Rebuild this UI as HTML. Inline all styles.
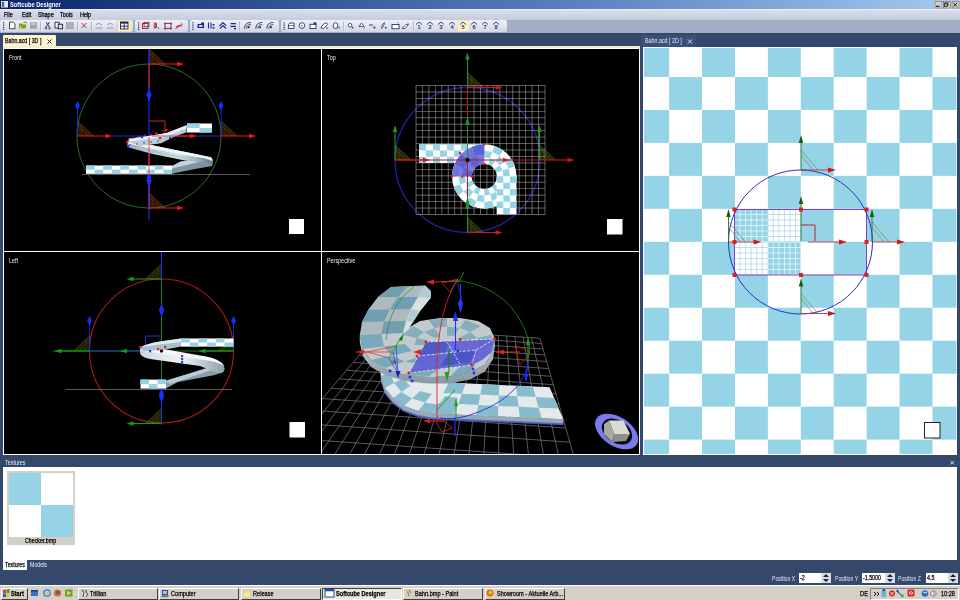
<!DOCTYPE html>
<html><head><meta charset="utf-8">
<style>
*{margin:0;padding:0;box-sizing:border-box}
html,body{width:960px;height:600px;overflow:hidden;background:#34486c;font-family:"Liberation Sans",sans-serif}
.a{position:absolute}
.t{position:absolute;white-space:nowrap;line-height:1;transform-origin:0 0}
svg{position:absolute;left:0;top:0}
</style></head><body>

<div class="a" style="left:0;top:33px;width:960px;height:567px;background:#34486c"></div>
<div class="a" style="left:0;top:0;width:960px;height:9px;background:linear-gradient(90deg,#0a246a 0%,#28488a 22%,#5a80c0 60%,#a6caf0 100%)"></div>
<div class="t" style="left:10px;top:0.8px;font-size:7.2px;color:#fff;font-weight:bold;transform:scaleX(0.8);">Softcube Designer</div>
<div class="a" style="left:0;top:9px;width:960px;height:11px;background:linear-gradient(#dadee9,#c6ccdd);border-top:1px solid #eceef5"></div>
<div class="t" style="left:4px;top:11.6px;font-size:6.6px;color:#000;font-weight:normal;transform:scaleX(0.82);-webkit-text-stroke:0.25px #000;">File</div>
<div class="t" style="left:22px;top:11.6px;font-size:6.6px;color:#000;font-weight:normal;transform:scaleX(0.82);-webkit-text-stroke:0.25px #000;">Edit</div>
<div class="t" style="left:38px;top:11.6px;font-size:6.6px;color:#000;font-weight:normal;transform:scaleX(0.82);-webkit-text-stroke:0.25px #000;">Shape</div>
<div class="t" style="left:60px;top:11.6px;font-size:6.6px;color:#000;font-weight:normal;transform:scaleX(0.82);-webkit-text-stroke:0.25px #000;">Tools</div>
<div class="t" style="left:80px;top:11.6px;font-size:6.6px;color:#000;font-weight:normal;transform:scaleX(0.82);-webkit-text-stroke:0.25px #000;">Help</div>
<div class="a" style="left:0;top:20px;width:960px;height:13px;background:#a2adc6"></div>
<div class="a" style="left:0px;top:20px;width:133px;height:12px;background:linear-gradient(#eef1f7,#d0d6e5);border-radius:2px"></div>
<div class="a" style="left:135px;top:20px;width:53px;height:12px;background:linear-gradient(#eef1f7,#d0d6e5);border-radius:2px"></div>
<div class="a" style="left:190px;top:20px;width:89px;height:12px;background:linear-gradient(#eef1f7,#d0d6e5);border-radius:2px"></div>
<div class="a" style="left:281px;top:20px;width:226px;height:12px;background:linear-gradient(#eef1f7,#d0d6e5);border-radius:2px"></div>
<svg width="960" height="600" viewBox="0 0 960 600" ><rect x="3" y="22.2" width="1.2" height="1.2" fill="#2a3050"/><rect x="3" y="24.4" width="1.2" height="1.2" fill="#2a3050"/><rect x="3" y="26.6" width="1.2" height="1.2" fill="#2a3050"/><rect x="3" y="28.8" width="1.2" height="1.2" fill="#2a3050"/><path d="M9.5 22 L13.2 22 L15 23.8 L15 28.7 L9.5 28.7 Z" fill="#fff" stroke="#222" stroke-width="0.8"/><path d="M19 23.5 L22 23.5 L23 24.5 L26.5 24.5 L25.5 28.6 L19 28.6 Z" fill="#8a9418"/><path d="M20 25.5 L22 27 L20 28.5 Z" fill="#e8e060"/><path d="M23.5 22.5 Q25.5 21.5 27 23" fill="none" stroke="#333" stroke-width="0.7"/><rect x="30" y="22" width="7" height="6.8" fill="#a4a4a8"/><rect x="31.2" y="22.5" width="4.6" height="2.6" fill="#c8c8cc"/><rect x="40.3" y="21.5" width="0.8" height="9" fill="#9aa4bc"/><rect x="41.099999999999994" y="21.5" width="0.6" height="9" fill="#fff" opacity="0.7"/><path d="M46 22 L49.5 27 M49.5 22 L46 27" stroke="#1a2050" stroke-width="0.9"/><circle cx="46" cy="28.2" r="0.9" fill="none" stroke="#1a2050" stroke-width="0.7"/><circle cx="49.5" cy="28.2" r="0.9" fill="none" stroke="#1a2050" stroke-width="0.7"/><rect x="55" y="22.2" width="4.2" height="5.8" fill="#fff" stroke="#111" stroke-width="0.8"/><rect x="58.2" y="24.2" width="4.4" height="4.6" fill="#dde" stroke="#111" stroke-width="0.8"/><rect x="66.5" y="22.5" width="7" height="6.3" fill="#b0b0b4" stroke="#98989c" stroke-width="0.6"/><rect x="77.2" y="21.5" width="0.8" height="9" fill="#9aa4bc"/><rect x="78.0" y="21.5" width="0.6" height="9" fill="#fff" opacity="0.7"/><path d="M81.5 23 L86.5 28 M86.5 23 L81.5 28" stroke="#c02848" stroke-width="1"/><rect x="91.2" y="21.5" width="0.8" height="9" fill="#9aa4bc"/><rect x="92.0" y="21.5" width="0.6" height="9" fill="#fff" opacity="0.7"/><path d="M95.5 28 L102 28 M96 24.5 Q99 22 102 25" fill="none" stroke="#909098" stroke-width="0.9"/><path d="M107 28 L113.5 28 M107 25 Q110 22 113 24.5" fill="none" stroke="#909098" stroke-width="0.9"/><rect x="116.8" y="21.5" width="0.8" height="9" fill="#9aa4bc"/><rect x="117.6" y="21.5" width="0.6" height="9" fill="#fff" opacity="0.7"/><rect x="118" y="20.5" width="13" height="11" fill="#fdf3c8" stroke="#f0d890" stroke-width="0.6"/><rect x="120.5" y="22" width="7.5" height="7" fill="#fff" stroke="#1a2060" stroke-width="0.9"/><rect x="120.5" y="22" width="7.5" height="1.6" fill="#1a2060"/><path d="M124.25 23.5 L124.25 29 M120.5 26.2 L128 26.2" stroke="#1a2060" stroke-width="0.9"/><rect x="138" y="22.2" width="1.2" height="1.2" fill="#2a3050"/><rect x="138" y="24.4" width="1.2" height="1.2" fill="#2a3050"/><rect x="138" y="26.6" width="1.2" height="1.2" fill="#2a3050"/><rect x="138" y="28.8" width="1.2" height="1.2" fill="#2a3050"/><rect x="142.5" y="23.5" width="5.5" height="5" fill="none" stroke="#d81830" stroke-width="1"/><rect x="144" y="22.3" width="5" height="4.5" fill="none" stroke="#303050" stroke-width="0.7"/><path d="M155 22.5 Q153 26 155 28.5 Q157 26 155 22.5" fill="none" stroke="#d81830" stroke-width="1"/><path d="M156.5 23 L156.5 28" stroke="#303050" stroke-width="0.7"/><circle cx="158.5" cy="28" r="0.6" fill="#222"/><rect x="165" y="23.5" width="6" height="5" fill="none" stroke="#303050" stroke-width="0.8"/><rect x="164.1" y="22.6" width="1.8" height="1.8" fill="#d81830"/><rect x="170.1" y="22.6" width="1.8" height="1.8" fill="#d81830"/><rect x="164.1" y="27.6" width="1.8" height="1.8" fill="#d81830"/><rect x="170.1" y="27.6" width="1.8" height="1.8" fill="#d81830"/><path d="M175.5 28.5 L182 24.5 M176 27 Q179 24 182 26" fill="none" stroke="#d81830" stroke-width="1"/><path d="M181 22.5 L182.5 24.5" stroke="#333" stroke-width="0.6"/><rect x="192.3" y="22.2" width="1.2" height="1.2" fill="#2a3050"/><rect x="192.3" y="24.4" width="1.2" height="1.2" fill="#2a3050"/><rect x="192.3" y="26.6" width="1.2" height="1.2" fill="#2a3050"/><rect x="192.3" y="28.8" width="1.2" height="1.2" fill="#2a3050"/><path d="M197.5 24 L201 24 L201 22.5 L204 22.5 L204 28 L197.5 28 Z" fill="#202890"/><rect x="199" y="25" width="3.5" height="2" fill="#c8d0f0"/><path d="M208.5 22.5 L208.5 28.5 M211 22.5 L211 28.5" stroke="#202890" stroke-width="1.1"/><rect x="212.5" y="24" width="2" height="1.5" fill="#202890"/><rect x="212.5" y="27" width="2" height="1.5" fill="#202890"/><path d="M219.5 26 L223 22.5 L226 25.5 M220 28.5 L223 25.5 L226 28.5" fill="none" stroke="#202890" stroke-width="1.1"/><rect x="230.5" y="23" width="5.5" height="1.3" fill="#202890"/><rect x="230.5" y="25.8" width="5.5" height="1.3" fill="#202890"/><rect x="234" y="28" width="2" height="1.3" fill="#202890"/><rect x="239.3" y="21.5" width="0.8" height="9" fill="#9aa4bc"/><rect x="240.10000000000002" y="21.5" width="0.6" height="9" fill="#fff" opacity="0.7"/><path d="M244.5 28.7 Q244.5 22.5 251.0 22.5" fill="none" stroke="#283068" stroke-width="0.9"/><path d="M246.5 28.7 Q246.5 24.5 251.0 24.5" fill="none" stroke="#283068" stroke-width="0.8"/><rect x="247.8" y="26.3" width="1.8" height="1.8" fill="#202050"/><path d="M255.8 28.7 Q255.8 22.5 262.3 22.5" fill="none" stroke="#283068" stroke-width="0.9"/><path d="M257.8 28.7 Q257.8 24.5 262.3 24.5" fill="none" stroke="#283068" stroke-width="0.8"/><rect x="259.1" y="26.3" width="1.8" height="1.8" fill="#202050"/><path d="M266.8 28.7 Q266.8 22.5 273.3 22.5" fill="none" stroke="#283068" stroke-width="0.9"/><path d="M268.8 28.7 Q268.8 24.5 273.3 24.5" fill="none" stroke="#283068" stroke-width="0.8"/><rect x="270.1" y="26.3" width="1.8" height="1.8" fill="#202050"/><rect x="283.5" y="22.2" width="1.2" height="1.2" fill="#2a3050"/><rect x="283.5" y="24.4" width="1.2" height="1.2" fill="#2a3050"/><rect x="283.5" y="26.6" width="1.2" height="1.2" fill="#2a3050"/><rect x="283.5" y="28.8" width="1.2" height="1.2" fill="#2a3050"/><path d="M288.5 24.5 L290 23 L294 23 L294 28.5 L288.5 28.5 Z" fill="#fff" stroke="#283070" stroke-width="0.9"/><path d="M288.5 25.5 L294 25.5" stroke="#283070" stroke-width="0.6"/><circle cx="302" cy="25.5" r="2.8" fill="#fff" stroke="#283070" stroke-width="0.9"/><circle cx="302" cy="25.5" r="0.7" fill="#283070"/><rect x="310" y="24.3" width="6" height="4.3" fill="#fff" stroke="#283070" stroke-width="0.9"/><rect x="313.5" y="22.3" width="2.8" height="2.4" fill="#283070"/><path d="M321 27 L325 23 Q327 22.5 327.5 24.5 L323.5 28.5 Q321 29 321 27 Z" fill="#fff" stroke="#283070" stroke-width="0.9"/><rect x="326.3" y="27.3" width="1.3" height="1.3" fill="#283070"/><ellipse cx="335.5" cy="25.7" rx="2.3" ry="3" fill="#fff" stroke="#283070" stroke-width="0.9"/><path d="M338 26.5 L340 28.5 M340 26.5 L338 28.5" stroke="#283070" stroke-width="0.6"/><rect x="343" y="21.5" width="0.8" height="9" fill="#9aa4bc"/><rect x="343.8" y="21.5" width="0.6" height="9" fill="#fff" opacity="0.7"/><circle cx="350.0" cy="25.2" r="1.8" fill="#fff" stroke="#283070" stroke-width="0.8"/><rect x="351.7" y="26.8" width="1.6" height="1.6" fill="#283070"/><path d="M359 26.5 L361.5 23 L364 26.5 Z" fill="#fff" stroke="#283070" stroke-width="0.8"/><path d="M363.5 28.5 L365 27" stroke="#283070" stroke-width="0.7"/><path d="M369 25 L373 25" stroke="#283070" stroke-width="0.9"/><rect x="373.5" y="26.6" width="1.8" height="1.8" fill="#283070"/><path d="M381.5 28.5 Q381.5 24 384.5 22.5 Q384.0 27 381.5 28.5" fill="#fff" stroke="#283070" stroke-width="0.8"/><rect x="385.0" y="27" width="1.5" height="1.5" fill="#283070"/><rect x="392" y="24.5" width="7" height="4.3" fill="#fff" stroke="#283070" stroke-width="0.9"/><path d="M397 22 L398.5 23.3" stroke="#283070" stroke-width="0.6"/><path d="M402 28.5 L406 24.5 L408.5 24.5 L405 28.5 Z" fill="#fff" stroke="#283070" stroke-width="0.8"/><path d="M407.5 22.5 L408.5 24" stroke="#283070" stroke-width="0.6"/><rect x="413.3" y="21.5" width="0.8" height="9" fill="#9aa4bc"/><rect x="414.1" y="21.5" width="0.6" height="9" fill="#fff" opacity="0.7"/><rect x="458" y="20.5" width="11" height="11" fill="#fdf3c8" stroke="#f0d890" stroke-width="0.5"/><path d="M416 24.5 L419 22 L422 24.5" fill="none" stroke="#283070" stroke-width="0.9"/><text x="419" y="29.2" font-size="5.5" font-weight="bold" text-anchor="middle" fill="#283070" font-family="Liberation Sans">1</text><path d="M427 24.5 L430 22 L433 24.5" fill="none" stroke="#283070" stroke-width="0.9"/><text x="430" y="29.2" font-size="5.5" font-weight="bold" text-anchor="middle" fill="#283070" font-family="Liberation Sans">2</text><path d="M438 24.5 L441 22 L444 24.5" fill="none" stroke="#283070" stroke-width="0.9"/><text x="441" y="29.2" font-size="5.5" font-weight="bold" text-anchor="middle" fill="#283070" font-family="Liberation Sans">3</text><path d="M449 24.5 L452 22 L455 24.5" fill="none" stroke="#283070" stroke-width="0.9"/><text x="452" y="29.2" font-size="5.5" font-weight="bold" text-anchor="middle" fill="#283070" font-family="Liberation Sans">4</text><path d="M460 24.5 L463 22 L466 24.5" fill="none" stroke="#283070" stroke-width="0.9"/><text x="463" y="29.2" font-size="5.5" font-weight="bold" text-anchor="middle" fill="#283070" font-family="Liberation Sans">5</text><path d="M471 24.5 L474 22 L477 24.5" fill="none" stroke="#283070" stroke-width="0.9"/><text x="474" y="29.2" font-size="5.5" font-weight="bold" text-anchor="middle" fill="#283070" font-family="Liberation Sans">6</text><path d="M482 24.5 L485 22 L488 24.5" fill="none" stroke="#283070" stroke-width="0.9"/><text x="485" y="29.2" font-size="5.5" font-weight="bold" text-anchor="middle" fill="#283070" font-family="Liberation Sans">7</text><path d="M493 24.5 L496 22 L499 24.5" fill="none" stroke="#283070" stroke-width="0.9"/><text x="496" y="29.2" font-size="5.5" font-weight="bold" text-anchor="middle" fill="#283070" font-family="Liberation Sans">8</text><rect x="934.5" y="1.2" width="7.5" height="6.8" fill="#d4d0c8" stroke="#fff" stroke-width="0.5"/><rect x="935.0" y="1.7" width="7" height="6.3" fill="none" stroke="#404040" stroke-width="0.5"/><rect x="943" y="1.2" width="7.5" height="6.8" fill="#d4d0c8" stroke="#fff" stroke-width="0.5"/><rect x="943.5" y="1.7" width="7" height="6.3" fill="none" stroke="#404040" stroke-width="0.5"/><rect x="951.5" y="1.2" width="7.5" height="6.8" fill="#d4d0c8" stroke="#fff" stroke-width="0.5"/><rect x="952.0" y="1.7" width="7" height="6.3" fill="none" stroke="#404040" stroke-width="0.5"/><rect x="936" y="5.8" width="3.5" height="1" fill="#000"/><rect x="945" y="2.8" width="3" height="2.6" fill="none" stroke="#000" stroke-width="0.7"/><rect x="944.3" y="4" width="3" height="2.6" fill="#d4d0c8" stroke="#000" stroke-width="0.7"/><path d="M953.5 3 L957 6.5 M957 3 L953.5 6.5" stroke="#000" stroke-width="0.9"/><rect x="1" y="1" width="7" height="6.5" fill="#e8ecf4"/><rect x="1.8" y="1.8" width="2.4" height="5" fill="#506090"/></svg>
<div class="a" style="left:3px;top:35px;width:53px;height:13px;background:#fbf5d4;border-radius:1px 1px 0 0"></div>
<div class="t" style="left:5px;top:37.6px;font-size:6.6px;color:#000;font-weight:normal;transform:scaleX(0.8);-webkit-text-stroke:0.25px #000;">Bahn.acd [ 3D ]</div>
<svg width="960" height="60" style="top:0"><path d="M47.5 39.5 L51.5 43.5 M51.5 39.5 L47.5 43.5" stroke="#222" stroke-width="1"/></svg>
<div class="a" style="left:641px;top:35px;width:55px;height:12px;background:#3b5078"></div>
<div class="t" style="left:645px;top:37.6px;font-size:6.6px;color:#e8ecf4;font-weight:normal;transform:scaleX(0.81);">Bahn.acd [ 2D ]</div>
<svg width="960" height="60" style="top:0"><path d="M688 39.5 L692 43.5 M692 39.5 L688 43.5" stroke="#dde3ee" stroke-width="1"/></svg>
<div class="a" style="left:3px;top:46px;width:637px;height:2px;background:#f3eed0"></div>
<div class="a" style="left:3px;top:48px;width:637px;height:407px;background:#fff"></div>
<div class="a" style="left:4px;top:49px;width:317px;height:202px;background:#000"></div>
<div class="a" style="left:322px;top:49px;width:317px;height:202px;background:#000"></div>
<div class="a" style="left:4px;top:252px;width:317px;height:202px;background:#000"></div>
<div class="a" style="left:322px;top:252px;width:317px;height:202px;background:#000"></div>
<svg width="960" height="600" viewBox="0 0 960 600" ><defs><clipPath id="cfv"><rect x="4" y="49" width="317" height="202"/></clipPath><clipPath id="ctv"><rect x="322" y="49" width="317" height="202"/></clipPath><clipPath id="clv"><rect x="4" y="252" width="317" height="202"/></clipPath></defs><g clip-path="url(#cfv)"><circle cx="149" cy="136" r="72" fill="none" stroke="#2a6e2a" stroke-width="1"/><line x1="82" y1="174.5" x2="250" y2="174.5" stroke="#707070" stroke-width="1" opacity="0.8"/><line x1="149" y1="49" x2="149" y2="220" stroke="#1830ff" stroke-width="1.1" opacity="1"/><line x1="149" y1="64" x2="149" y2="89" stroke="#e81818" stroke-width="1.1" opacity="1"/><line x1="149" y1="140" x2="149" y2="210" stroke="#e81818" stroke-width="1.1" opacity="1"/><line x1="112" y1="136" x2="221" y2="136" stroke="#2030c0" stroke-width="1.1" opacity="1"/><path d="M149 121 L165 121 L165 136" fill="none" stroke="#d02020" stroke-width="1"/><path d="M149 49 L165 64 L149 64 Z" fill="#a05a10" opacity="0.28"/><line x1="149" y1="49" x2="165" y2="64" stroke="#a05a10" stroke-width="0.7" opacity="0.7"/><line x1="149" y1="53" x2="161" y2="64" stroke="#a05a10" stroke-width="0.6" opacity="0.55"/><line x1="153" y1="53" x2="153" y2="64" stroke="#a05a10" stroke-width="0.5" opacity="0.3"/><line x1="149" y1="37" x2="149" y2="64" stroke="#1830ff" stroke-width="1.0" opacity="0.8"/><path d="M149 29 L151.3 33.5 L149 39 L146.7 33.5 Z" fill="#1830ff"/><line x1="149" y1="64" x2="178" y2="64" stroke="#e81818" stroke-width="1.1" opacity="1"/><path d="M184 64 L177 61.7 L177 66.3 Z" fill="#e81818"/><path d="M77.5 121 L93.5 136 L77.5 136 Z" fill="#a05a10" opacity="0.28"/><line x1="77.5" y1="121" x2="93.5" y2="136" stroke="#a05a10" stroke-width="0.7" opacity="0.7"/><line x1="77.5" y1="125" x2="89.5" y2="136" stroke="#a05a10" stroke-width="0.6" opacity="0.55"/><line x1="81.5" y1="125" x2="81.5" y2="136" stroke="#a05a10" stroke-width="0.5" opacity="0.3"/><line x1="77.5" y1="109" x2="77.5" y2="136" stroke="#1830ff" stroke-width="1.0" opacity="0.8"/><path d="M77.5 101 L79.8 105.5 L77.5 111 L75.2 105.5 Z" fill="#1830ff"/><line x1="77.5" y1="136" x2="106.5" y2="136" stroke="#e81818" stroke-width="1.1" opacity="1"/><path d="M112.5 136 L105.5 133.7 L105.5 138.3 Z" fill="#e81818"/><path d="M221 121 L237 136 L221 136 Z" fill="#a05a10" opacity="0.28"/><line x1="221" y1="121" x2="237" y2="136" stroke="#a05a10" stroke-width="0.7" opacity="0.7"/><line x1="221" y1="125" x2="233" y2="136" stroke="#a05a10" stroke-width="0.6" opacity="0.55"/><line x1="225" y1="125" x2="225" y2="136" stroke="#a05a10" stroke-width="0.5" opacity="0.3"/><line x1="221" y1="109" x2="221" y2="136" stroke="#1830ff" stroke-width="1.0" opacity="0.8"/><path d="M221 101 L223.3 105.5 L221 111 L218.7 105.5 Z" fill="#1830ff"/><line x1="221" y1="136" x2="250" y2="136" stroke="#e81818" stroke-width="1.1" opacity="1"/><path d="M256 136 L249 133.7 L249 138.3 Z" fill="#e81818"/><path d="M149 193 L165 208 L149 208 Z" fill="#a05a10" opacity="0.28"/><line x1="149" y1="193" x2="165" y2="208" stroke="#a05a10" stroke-width="0.7" opacity="0.7"/><line x1="149" y1="197" x2="161" y2="208" stroke="#a05a10" stroke-width="0.6" opacity="0.55"/><line x1="153" y1="197" x2="153" y2="208" stroke="#a05a10" stroke-width="0.5" opacity="0.3"/><line x1="149" y1="181" x2="149" y2="208" stroke="#1830ff" stroke-width="1.0" opacity="0.8"/><path d="M149 173 L151.3 177.5 L149 183 L146.7 177.5 Z" fill="#1830ff"/><line x1="149" y1="208" x2="178" y2="208" stroke="#e81818" stroke-width="1.1" opacity="1"/><path d="M184 208 L177 205.7 L177 210.3 Z" fill="#e81818"/><path d="M149 89 L151.6 94.85 L149 102 L146.4 94.85 Z" fill="#1830ff"/><path d="M149 175 L151.6 180.85 L149 188 L146.4 180.85 Z" fill="#1830ff"/><line x1="149" y1="136" x2="190" y2="136" stroke="#e81818" stroke-width="1.1" opacity="1"/><path d="M197 136 L190 133.7 L190 138.3 Z" fill="#e81818"/><defs><linearGradient id="fg1" x1="0" y1="0" x2="0" y2="1"><stop offset="0" stop-color="#f0f6f8"/><stop offset="0.45" stop-color="#b8c8d2"/><stop offset="1" stop-color="#587080"/></linearGradient><linearGradient id="fg2" x1="0" y1="0" x2="1" y2="0"><stop offset="0" stop-color="#9ab0bc"/><stop offset="0.6" stop-color="#d8e4ea"/><stop offset="1" stop-color="#607888"/></linearGradient></defs><path d="M172 165.9 L180.7 161.6 L200 159 L211 157.3 Q214 162 212 166 L195 169 L172 173.8 Z" fill="#8094a2"/><path d="M172 165.9 L180.7 161.6 L200 159 L211 157.3 Q206 161 195 163 L172 168.5 Z" fill="#c4d4dc"/><path d="M128.7 140 L152.5 145.3 L174 149.7 L195.8 154 L211 157.3 Q214 161 212 164 L200 162 L185 160.5 L174 158.3 L152.5 154 L128.7 147.5 Q126 144 128.7 140 Z" fill="url(#fg2)"/><path d="M128.7 140 L152.5 145.3 L174 149.7 L195.8 154 L211 157.3 Q213 159 212.5 161 Q204 157.5 195.8 157 L174 153 L152.5 149 L128 143.5 Z" fill="#eef4f7"/><path d="M135 146 L152.5 150.5 L174 155 L195.8 159 L205 161 L195.8 160.5 L174 156.7 L152.5 152.3 Z" fill="#9cc4d4" opacity="0.6"/><path d="M128.7 138.8 L152.5 135.6 L166.6 132.9 L186.6 125.3 L186.6 132.3 L174 136.7 L161 143.2 L140 146 L128.7 142 Z" fill="#b8ccd8"/><path d="M128.7 138.8 L152.5 135.6 L166.6 132.9 L186.6 125.3 L186.6 128.3 L168 135.5 L152.5 138.5 L130 141.5 Z" fill="#e8f0f4"/><rect x="127.3" y="140.3" width="1.4" height="1.4" fill="#e02020"/><rect x="132.3" y="137.3" width="1.4" height="1.4" fill="#2040ff"/><rect x="138.3" y="135.8" width="1.4" height="1.4" fill="#e02020"/><rect x="144.3" y="134.3" width="1.4" height="1.4" fill="#2040ff"/><rect x="150.3" y="133.3" width="1.4" height="1.4" fill="#e02020"/><rect x="156.3" y="132.3" width="1.4" height="1.4" fill="#2040ff"/><rect x="162.3" y="130.3" width="1.4" height="1.4" fill="#e02020"/><rect x="129.3" y="144.3" width="1.4" height="1.4" fill="#2040ff"/><rect x="136.3" y="143.3" width="1.4" height="1.4" fill="#e02020"/><rect x="143.3" y="142.3" width="1.4" height="1.4" fill="#2040ff"/><rect x="150.3" y="141.3" width="1.4" height="1.4" fill="#e02020"/><rect x="157.3" y="140.3" width="1.4" height="1.4" fill="#2040ff"/><rect x="187" y="123.5" width="25" height="9.0" fill="#fff"/><rect x="187.00" y="123.50" width="12.50" height="4.50" fill="#95d4e7"/><rect x="199.50" y="128.00" width="12.50" height="4.50" fill="#95d4e7"/><rect x="86" y="165.5" width="86" height="8.300000000000011" fill="#fff"/><rect x="86.00" y="165.50" width="8.60" height="4.15" fill="#95d4e7"/><rect x="103.20" y="165.50" width="8.60" height="4.15" fill="#95d4e7"/><rect x="120.40" y="165.50" width="8.60" height="4.15" fill="#95d4e7"/><rect x="137.60" y="165.50" width="8.60" height="4.15" fill="#95d4e7"/><rect x="154.80" y="165.50" width="8.60" height="4.15" fill="#95d4e7"/><rect x="94.60" y="169.65" width="8.60" height="4.15" fill="#95d4e7"/><rect x="111.80" y="169.65" width="8.60" height="4.15" fill="#95d4e7"/><rect x="129.00" y="169.65" width="8.60" height="4.15" fill="#95d4e7"/><rect x="146.20" y="169.65" width="8.60" height="4.15" fill="#95d4e7"/><rect x="163.40" y="169.65" width="8.60" height="4.15" fill="#95d4e7"/><rect x="126" y="141" width="2.2" height="2.2" fill="#e02020"/><rect x="127" y="145" width="2.2" height="2.2" fill="#2040ff"/><rect x="155" y="133" width="2.2" height="2.2" fill="#e02020"/><rect x="169" y="137" width="2.2" height="2.2" fill="#2040ff"/><rect x="159" y="137" width="2.2" height="2.2" fill="#e02020"/><rect x="141" y="136" width="2.2" height="2.2" fill="#2040ff"/><rect x="165" y="129" width="2.2" height="2.2" fill="#e02020"/><line x1="149" y1="137" x2="149" y2="176" stroke="#d02040" stroke-width="0.9" opacity="0.85"/><line x1="152" y1="136" x2="190" y2="136" stroke="#d02020" stroke-width="0.9" opacity="0.8"/><rect x="289" y="219" width="15" height="15" fill="#fff"/></g><g clip-path="url(#ctv)"><circle cx="467.5" cy="160" r="72.5" fill="none" stroke="#2020a0" stroke-width="1.3"/><line x1="416.0" y1="85.5" x2="416.0" y2="214.5" stroke="#c4beb6" stroke-width="0.6" opacity="0.85"/><line x1="416" y1="85.5" x2="545.0" y2="85.5" stroke="#c4beb6" stroke-width="0.6" opacity="0.85"/><line x1="422.45" y1="85.5" x2="422.45" y2="214.5" stroke="#c4beb6" stroke-width="0.6" opacity="0.85"/><line x1="416" y1="91.95" x2="545.0" y2="91.95" stroke="#c4beb6" stroke-width="0.6" opacity="0.85"/><line x1="428.9" y1="85.5" x2="428.9" y2="214.5" stroke="#c4beb6" stroke-width="0.6" opacity="0.85"/><line x1="416" y1="98.4" x2="545.0" y2="98.4" stroke="#c4beb6" stroke-width="0.6" opacity="0.85"/><line x1="435.35" y1="85.5" x2="435.35" y2="214.5" stroke="#c4beb6" stroke-width="0.6" opacity="0.85"/><line x1="416" y1="104.85" x2="545.0" y2="104.85" stroke="#c4beb6" stroke-width="0.6" opacity="0.85"/><line x1="441.8" y1="85.5" x2="441.8" y2="214.5" stroke="#c4beb6" stroke-width="0.6" opacity="0.85"/><line x1="416" y1="111.3" x2="545.0" y2="111.3" stroke="#c4beb6" stroke-width="0.6" opacity="0.85"/><line x1="448.25" y1="85.5" x2="448.25" y2="214.5" stroke="#c4beb6" stroke-width="0.6" opacity="0.85"/><line x1="416" y1="117.75" x2="545.0" y2="117.75" stroke="#c4beb6" stroke-width="0.6" opacity="0.85"/><line x1="454.7" y1="85.5" x2="454.7" y2="214.5" stroke="#c4beb6" stroke-width="0.6" opacity="0.85"/><line x1="416" y1="124.2" x2="545.0" y2="124.2" stroke="#c4beb6" stroke-width="0.6" opacity="0.85"/><line x1="461.15" y1="85.5" x2="461.15" y2="214.5" stroke="#c4beb6" stroke-width="0.6" opacity="0.85"/><line x1="416" y1="130.65" x2="545.0" y2="130.65" stroke="#c4beb6" stroke-width="0.6" opacity="0.85"/><line x1="467.6" y1="85.5" x2="467.6" y2="214.5" stroke="#c4beb6" stroke-width="0.6" opacity="0.85"/><line x1="416" y1="137.1" x2="545.0" y2="137.1" stroke="#c4beb6" stroke-width="0.6" opacity="0.85"/><line x1="474.05" y1="85.5" x2="474.05" y2="214.5" stroke="#c4beb6" stroke-width="0.6" opacity="0.85"/><line x1="416" y1="143.55" x2="545.0" y2="143.55" stroke="#c4beb6" stroke-width="0.6" opacity="0.85"/><line x1="480.5" y1="85.5" x2="480.5" y2="214.5" stroke="#c4beb6" stroke-width="0.6" opacity="0.85"/><line x1="416" y1="150.0" x2="545.0" y2="150.0" stroke="#c4beb6" stroke-width="0.6" opacity="0.85"/><line x1="486.95" y1="85.5" x2="486.95" y2="214.5" stroke="#c4beb6" stroke-width="0.6" opacity="0.85"/><line x1="416" y1="156.45" x2="545.0" y2="156.45" stroke="#c4beb6" stroke-width="0.6" opacity="0.85"/><line x1="493.4" y1="85.5" x2="493.4" y2="214.5" stroke="#c4beb6" stroke-width="0.6" opacity="0.85"/><line x1="416" y1="162.9" x2="545.0" y2="162.9" stroke="#c4beb6" stroke-width="0.6" opacity="0.85"/><line x1="499.85" y1="85.5" x2="499.85" y2="214.5" stroke="#c4beb6" stroke-width="0.6" opacity="0.85"/><line x1="416" y1="169.35000000000002" x2="545.0" y2="169.35000000000002" stroke="#c4beb6" stroke-width="0.6" opacity="0.85"/><line x1="506.3" y1="85.5" x2="506.3" y2="214.5" stroke="#c4beb6" stroke-width="0.6" opacity="0.85"/><line x1="416" y1="175.8" x2="545.0" y2="175.8" stroke="#c4beb6" stroke-width="0.6" opacity="0.85"/><line x1="512.75" y1="85.5" x2="512.75" y2="214.5" stroke="#c4beb6" stroke-width="0.6" opacity="0.85"/><line x1="416" y1="182.25" x2="545.0" y2="182.25" stroke="#c4beb6" stroke-width="0.6" opacity="0.85"/><line x1="519.2" y1="85.5" x2="519.2" y2="214.5" stroke="#c4beb6" stroke-width="0.6" opacity="0.85"/><line x1="416" y1="188.7" x2="545.0" y2="188.7" stroke="#c4beb6" stroke-width="0.6" opacity="0.85"/><line x1="525.65" y1="85.5" x2="525.65" y2="214.5" stroke="#c4beb6" stroke-width="0.6" opacity="0.85"/><line x1="416" y1="195.15" x2="545.0" y2="195.15" stroke="#c4beb6" stroke-width="0.6" opacity="0.85"/><line x1="532.1" y1="85.5" x2="532.1" y2="214.5" stroke="#c4beb6" stroke-width="0.6" opacity="0.85"/><line x1="416" y1="201.60000000000002" x2="545.0" y2="201.60000000000002" stroke="#c4beb6" stroke-width="0.6" opacity="0.85"/><line x1="538.55" y1="85.5" x2="538.55" y2="214.5" stroke="#c4beb6" stroke-width="0.6" opacity="0.85"/><line x1="416" y1="208.05" x2="545.0" y2="208.05" stroke="#c4beb6" stroke-width="0.6" opacity="0.85"/><line x1="545.0" y1="85.5" x2="545.0" y2="214.5" stroke="#c4beb6" stroke-width="0.6" opacity="0.85"/><line x1="416" y1="214.5" x2="545.0" y2="214.5" stroke="#c4beb6" stroke-width="0.6" opacity="0.85"/><defs><mask id="ringm"><rect x="380" y="100" width="200" height="140" fill="#fff"/><circle cx="484.3" cy="176.5" r="12.5" fill="#000"/></mask></defs><g mask="url(#ringm)"><circle cx="484.3" cy="176.5" r="32.3" fill="#fff"/><path d="M496.8 176.5 L503.4 176.5 L502.5 182.4 L496.2 180.4 Z" fill="#95d4e7"/><path d="M510.0 176.5 L516.6 176.5 L515.0 186.5 L508.7 184.4 Z" fill="#95d4e7"/><path d="M502.5 182.4 L508.7 184.4 L505.1 191.6 L499.8 187.7 Z" fill="#95d4e7"/><path d="M494.4 183.8 L499.8 187.7 L495.5 192.0 L491.6 186.6 Z" fill="#95d4e7"/><path d="M505.1 191.6 L510.4 195.5 L503.3 202.6 L499.4 197.3 Z" fill="#95d4e7"/><path d="M495.5 192.0 L499.4 197.3 L492.2 200.9 L490.2 194.7 Z" fill="#95d4e7"/><path d="M488.2 188.4 L490.2 194.7 L484.3 195.6 L484.3 189.0 Z" fill="#95d4e7"/><path d="M492.2 200.9 L494.3 207.2 L484.3 208.8 L484.3 202.2 Z" fill="#95d4e7"/><path d="M484.3 195.6 L484.3 202.2 L476.4 200.9 L478.4 194.7 Z" fill="#95d4e7"/><path d="M480.4 188.4 L478.4 194.7 L473.1 192.0 L477.0 186.6 Z" fill="#95d4e7"/><path d="M476.4 200.9 L474.3 207.2 L465.3 202.6 L469.2 197.3 Z" fill="#95d4e7"/><path d="M473.1 192.0 L469.2 197.3 L463.5 191.6 L468.8 187.7 Z" fill="#95d4e7"/><path d="M474.2 183.8 L468.8 187.7 L466.1 182.4 L472.4 180.4 Z" fill="#95d4e7"/><path d="M463.5 191.6 L458.2 195.5 L453.6 186.5 L459.9 184.4 Z" fill="#95d4e7"/><path d="M466.1 182.4 L459.9 184.4 L458.6 176.5 L465.2 176.5 Z" fill="#95d4e7"/><path d="M471.8 176.5 L465.2 176.5 L466.1 170.6 L472.4 172.6 Z" fill="#95d4e7"/><path d="M458.6 176.5 L452.0 176.5 L453.6 166.5 L459.9 168.6 Z" fill="#95d4e7"/><path d="M466.1 170.6 L459.9 168.6 L463.5 161.4 L468.8 165.3 Z" fill="#95d4e7"/><path d="M474.2 169.2 L468.8 165.3 L473.1 161.0 L477.0 166.4 Z" fill="#95d4e7"/><path d="M463.5 161.4 L458.2 157.5 L465.3 150.4 L469.2 155.7 Z" fill="#95d4e7"/><path d="M473.1 161.0 L469.2 155.7 L476.4 152.1 L478.4 158.3 Z" fill="#95d4e7"/><path d="M480.4 164.6 L478.4 158.3 L484.3 157.4 L484.3 164.0 Z" fill="#95d4e7"/><path d="M476.4 152.1 L474.3 145.8 L484.3 144.2 L484.3 150.8 Z" fill="#95d4e7"/><path d="M484.3 157.4 L484.3 150.8 L492.2 152.1 L490.2 158.3 Z" fill="#95d4e7"/><path d="M488.2 164.6 L490.2 158.3 L495.5 161.0 L491.6 166.4 Z" fill="#95d4e7"/><path d="M492.2 152.1 L494.3 145.8 L503.3 150.4 L499.4 155.7 Z" fill="#95d4e7"/><path d="M495.5 161.0 L499.4 155.7 L505.1 161.4 L499.8 165.3 Z" fill="#95d4e7"/><path d="M494.4 169.2 L499.8 165.3 L502.5 170.6 L496.2 172.6 Z" fill="#95d4e7"/><path d="M505.1 161.4 L510.4 157.5 L515.0 166.5 L508.7 168.6 Z" fill="#95d4e7"/><path d="M502.5 170.6 L508.7 168.6 L510.0 176.5 L503.4 176.5 Z" fill="#95d4e7"/></g><rect x="419" y="144.2" width="65.30000000000001" height="18.80000000000001" fill="#fff"/><rect x="419.00" y="144.20" width="7.00" height="6.27" fill="#95d4e7"/><rect x="433.00" y="144.20" width="7.00" height="6.27" fill="#95d4e7"/><rect x="447.00" y="144.20" width="7.00" height="6.27" fill="#95d4e7"/><rect x="461.00" y="144.20" width="7.00" height="6.27" fill="#95d4e7"/><rect x="475.00" y="144.20" width="7.00" height="6.27" fill="#95d4e7"/><rect x="426.00" y="150.47" width="7.00" height="6.27" fill="#95d4e7"/><rect x="440.00" y="150.47" width="7.00" height="6.27" fill="#95d4e7"/><rect x="454.00" y="150.47" width="7.00" height="6.27" fill="#95d4e7"/><rect x="468.00" y="150.47" width="7.00" height="6.27" fill="#95d4e7"/><rect x="482.00" y="150.47" width="2.30" height="6.27" fill="#95d4e7"/><rect x="419.00" y="156.73" width="7.00" height="6.27" fill="#95d4e7"/><rect x="433.00" y="156.73" width="7.00" height="6.27" fill="#95d4e7"/><rect x="447.00" y="156.73" width="7.00" height="6.27" fill="#95d4e7"/><rect x="461.00" y="156.73" width="7.00" height="6.27" fill="#95d4e7"/><rect x="475.00" y="156.73" width="7.00" height="6.27" fill="#95d4e7"/><rect x="496.7" y="176.5" width="19.8" height="37.8" fill="#fff"/><rect x="496.7" y="176.5" width="6.6" height="6.3" fill="#95d4e7"/><rect x="509.9" y="176.5" width="6.6" height="6.3" fill="#95d4e7"/><rect x="503.3" y="182.8" width="6.6" height="6.3" fill="#95d4e7"/><rect x="496.7" y="189.1" width="6.6" height="6.3" fill="#95d4e7"/><rect x="509.9" y="189.1" width="6.6" height="6.3" fill="#95d4e7"/><rect x="503.3" y="195.4" width="6.6" height="6.3" fill="#95d4e7"/><rect x="496.7" y="201.7" width="6.6" height="6.3" fill="#95d4e7"/><rect x="509.9" y="201.7" width="6.6" height="6.3" fill="#95d4e7"/><rect x="503.3" y="208.0" width="6.6" height="6.3" fill="#95d4e7"/><path d="M452.0 176.5 A32.3 32.3 0 0 1 484.3 144.2 L484.3 164.0 A12.5 12.5 0 0 0 471.8 176.5 Z" fill="#6464dc" opacity="0.85"/><path d="M471.8 176.5 L461.9 176.5 L463.6 167.9 L472.8 171.7 Z" fill="#3c46c0" opacity="0.45"/><path d="M463.6 167.9 L454.5 164.1 L461.5 153.7 L468.5 160.7 Z" fill="#3c46c0" opacity="0.45"/><path d="M475.5 167.7 L468.5 160.7 L475.7 155.8 L479.5 165.0 Z" fill="#3c46c0" opacity="0.45"/><path d="M475.7 155.8 L471.9 146.7 L484.3 144.2 L484.3 154.1 Z" fill="#3c46c0" opacity="0.45"/><line x1="467.5" y1="87" x2="467.5" y2="125" stroke="#d01818" stroke-width="1" opacity="1"/><line x1="467.5" y1="160" x2="467.5" y2="230" stroke="#c01818" stroke-width="1" opacity="1"/><line x1="395" y1="160" x2="539" y2="160" stroke="#c01818" stroke-width="1" opacity="1"/><path d="M467.5 72.5 L483.5 87.5 L467.5 87.5 Z" fill="#7a8a20" opacity="0.28"/><line x1="467.5" y1="72.5" x2="483.5" y2="87.5" stroke="#7a8a20" stroke-width="0.7" opacity="0.7"/><line x1="467.5" y1="76.5" x2="479.5" y2="87.5" stroke="#7a8a20" stroke-width="0.6" opacity="0.55"/><line x1="471.5" y1="76.5" x2="471.5" y2="87.5" stroke="#7a8a20" stroke-width="0.5" opacity="0.3"/><line x1="467.5" y1="58.5" x2="467.5" y2="87.5" stroke="#2a8c2a" stroke-width="1.1" opacity="1"/><path d="M467.5 52.5 L469.8 59.5 L465.2 59.5 Z" fill="#2a8c2a"/><line x1="467.5" y1="87.5" x2="496.5" y2="87.5" stroke="#d01818" stroke-width="1.1" opacity="1"/><path d="M502.5 87.5 L495.5 85.2 L495.5 89.8 Z" fill="#d01818"/><path d="M395 145 L411 160 L395 160 Z" fill="#7a8a20" opacity="0.28"/><line x1="395" y1="145" x2="411" y2="160" stroke="#7a8a20" stroke-width="0.7" opacity="0.7"/><line x1="395" y1="149" x2="407" y2="160" stroke="#7a8a20" stroke-width="0.6" opacity="0.55"/><line x1="399" y1="149" x2="399" y2="160" stroke="#7a8a20" stroke-width="0.5" opacity="0.3"/><line x1="395" y1="131" x2="395" y2="160" stroke="#2a8c2a" stroke-width="1.1" opacity="1"/><path d="M395 125 L397.3 132 L392.7 132 Z" fill="#2a8c2a"/><line x1="395" y1="160" x2="424" y2="160" stroke="#d01818" stroke-width="1.1" opacity="1"/><path d="M430 160 L423 157.7 L423 162.3 Z" fill="#d01818"/><path d="M539.5 145 L555.5 160 L539.5 160 Z" fill="#7a8a20" opacity="0.28"/><line x1="539.5" y1="145" x2="555.5" y2="160" stroke="#7a8a20" stroke-width="0.7" opacity="0.7"/><line x1="539.5" y1="149" x2="551.5" y2="160" stroke="#7a8a20" stroke-width="0.6" opacity="0.55"/><line x1="543.5" y1="149" x2="543.5" y2="160" stroke="#7a8a20" stroke-width="0.5" opacity="0.3"/><line x1="539.5" y1="131" x2="539.5" y2="160" stroke="#2a8c2a" stroke-width="1.1" opacity="1"/><path d="M539.5 125 L541.8 132 L537.2 132 Z" fill="#2a8c2a"/><line x1="539.5" y1="160" x2="568.5" y2="160" stroke="#d01818" stroke-width="1.1" opacity="1"/><path d="M574.5 160 L567.5 157.7 L567.5 162.3 Z" fill="#d01818"/><path d="M467.5 217.5 L483.5 232.5 L467.5 232.5 Z" fill="#7a8a20" opacity="0.28"/><line x1="467.5" y1="217.5" x2="483.5" y2="232.5" stroke="#7a8a20" stroke-width="0.7" opacity="0.7"/><line x1="467.5" y1="221.5" x2="479.5" y2="232.5" stroke="#7a8a20" stroke-width="0.6" opacity="0.55"/><line x1="471.5" y1="221.5" x2="471.5" y2="232.5" stroke="#7a8a20" stroke-width="0.5" opacity="0.3"/><line x1="467.5" y1="203.5" x2="467.5" y2="232.5" stroke="#2a8c2a" stroke-width="1.1" opacity="1"/><path d="M467.5 197.5 L469.8 204.5 L465.2 204.5 Z" fill="#2a8c2a"/><line x1="467.5" y1="232.5" x2="496.5" y2="232.5" stroke="#d01818" stroke-width="1.1" opacity="1"/><path d="M502.5 232.5 L495.5 230.2 L495.5 234.8 Z" fill="#d01818"/><line x1="467.5" y1="125" x2="467.5" y2="160" stroke="#2a8c2a" stroke-width="1" opacity="1"/><path d="M467.5 116 L469.8 125 L465.2 125 Z" fill="#2a8c2a"/><path d="M510 160 L503 157.7 L503 162.3 Z" fill="#d01818"/><path d="M467.5 200 L469.8 209 L465.2 209 Z" fill="#2a8c2a"/><circle cx="467.5" cy="160" r="2.2" fill="#000"/><rect x="451" y="175.5" width="2.2" height="2.2" fill="#e02020"/><rect x="461" y="175.5" width="2.2" height="2.2" fill="#e02020"/><rect x="470.8" y="175.5" width="2.2" height="2.2" fill="#e02020"/><rect x="483.3" y="143.2" width="2.2" height="2.2" fill="#e02020"/><rect x="483.3" y="163" width="2.2" height="2.2" fill="#e02020"/><rect x="459" y="152" width="2.2" height="2.2" fill="#e02020"/><rect x="607" y="219" width="15.5" height="15.5" fill="#fff"/></g><g clip-path="url(#clv)"><circle cx="161.5" cy="351" r="72" fill="none" stroke="#b01818" stroke-width="1.1"/><line x1="65.5" y1="389.5" x2="232" y2="389.5" stroke="#707070" stroke-width="1" opacity="0.8"/><line x1="161.5" y1="252" x2="161.5" y2="425" stroke="#1830ff" stroke-width="1.1" opacity="1"/><line x1="161.5" y1="279" x2="161.5" y2="423" stroke="#18801a" stroke-width="1" opacity="1"/><line x1="53" y1="351" x2="233" y2="351" stroke="#18801a" stroke-width="1" opacity="1"/><line x1="89.5" y1="351" x2="161.5" y2="351" stroke="#2030c0" stroke-width="1.1" opacity="1"/><path d="M161.5 336 L145.5 336 L145.5 351" fill="none" stroke="#2030d0" stroke-width="1"/><path d="M161.5 264 L145.5 279 L161.5 279 Z" fill="#707010" opacity="0.28"/><line x1="161.5" y1="264" x2="145.5" y2="279" stroke="#707010" stroke-width="0.7" opacity="0.7"/><line x1="161.5" y1="268" x2="149.5" y2="279" stroke="#707010" stroke-width="0.6" opacity="0.55"/><line x1="157.5" y1="268" x2="157.5" y2="279" stroke="#707010" stroke-width="0.5" opacity="0.3"/><line x1="161.5" y1="252" x2="161.5" y2="279" stroke="#1830ff" stroke-width="1.0" opacity="0.8"/><path d="M161.5 244 L163.8 248.5 L161.5 254 L159.2 248.5 Z" fill="#1830ff"/><line x1="161.5" y1="279" x2="132.5" y2="279" stroke="#10a010" stroke-width="1.1" opacity="1"/><path d="M126.5 279 L133.5 276.7 L133.5 281.3 Z" fill="#10a010"/><path d="M89.5 336 L73.5 351 L89.5 351 Z" fill="#707010" opacity="0.28"/><line x1="89.5" y1="336" x2="73.5" y2="351" stroke="#707010" stroke-width="0.7" opacity="0.7"/><line x1="89.5" y1="340" x2="77.5" y2="351" stroke="#707010" stroke-width="0.6" opacity="0.55"/><line x1="85.5" y1="340" x2="85.5" y2="351" stroke="#707010" stroke-width="0.5" opacity="0.3"/><line x1="89.5" y1="324" x2="89.5" y2="351" stroke="#1830ff" stroke-width="1.0" opacity="0.8"/><path d="M89.5 316 L91.8 320.5 L89.5 326 L87.2 320.5 Z" fill="#1830ff"/><line x1="89.5" y1="351" x2="60.5" y2="351" stroke="#10a010" stroke-width="1.1" opacity="1"/><path d="M54.5 351 L61.5 348.7 L61.5 353.3 Z" fill="#10a010"/><path d="M233.5 336 L217.5 351 L233.5 351 Z" fill="#707010" opacity="0.28"/><line x1="233.5" y1="336" x2="217.5" y2="351" stroke="#707010" stroke-width="0.7" opacity="0.7"/><line x1="233.5" y1="340" x2="221.5" y2="351" stroke="#707010" stroke-width="0.6" opacity="0.55"/><line x1="229.5" y1="340" x2="229.5" y2="351" stroke="#707010" stroke-width="0.5" opacity="0.3"/><line x1="233.5" y1="324" x2="233.5" y2="351" stroke="#1830ff" stroke-width="1.0" opacity="0.8"/><path d="M233.5 316 L235.8 320.5 L233.5 326 L231.2 320.5 Z" fill="#1830ff"/><line x1="233.5" y1="351" x2="204.5" y2="351" stroke="#10a010" stroke-width="1.1" opacity="1"/><path d="M198.5 351 L205.5 348.7 L205.5 353.3 Z" fill="#10a010"/><path d="M161.5 408.5 L145.5 423.5 L161.5 423.5 Z" fill="#707010" opacity="0.28"/><line x1="161.5" y1="408.5" x2="145.5" y2="423.5" stroke="#707010" stroke-width="0.7" opacity="0.7"/><line x1="161.5" y1="412.5" x2="149.5" y2="423.5" stroke="#707010" stroke-width="0.6" opacity="0.55"/><line x1="157.5" y1="412.5" x2="157.5" y2="423.5" stroke="#707010" stroke-width="0.5" opacity="0.3"/><line x1="161.5" y1="396.5" x2="161.5" y2="423.5" stroke="#1830ff" stroke-width="1.0" opacity="0.8"/><path d="M161.5 388.5 L163.8 393.0 L161.5 398.5 L159.2 393.0 Z" fill="#1830ff"/><line x1="161.5" y1="423.5" x2="132.5" y2="423.5" stroke="#10a010" stroke-width="1.1" opacity="1"/><path d="M126.5 423.5 L133.5 421.2 L133.5 425.8 Z" fill="#10a010"/><path d="M161.5 304 L164.1 309.85 L161.5 317 L158.9 309.85 Z" fill="#1830ff"/><path d="M161.5 390 L164.1 395.85 L161.5 403 L158.9 395.85 Z" fill="#1830ff"/><path d="M120 351 L127 348.7 L127 353.3 Z" fill="#10a010"/><defs><linearGradient id="lg2" x1="0" y1="0" x2="1" y2="0"><stop offset="0" stop-color="#c8d8e0"/><stop offset="0.5" stop-color="#eef4f6"/><stop offset="1" stop-color="#8aa0ac"/></linearGradient></defs><path d="M165 381 L200 370 Q215 365 224 366 Q226 372 215 375 L178 382 L165 389 Z" fill="#8a9ea8"/><path d="M165 381 L198 371 Q214 366 224 366 Q212 370 200 374 L170 384 Z" fill="#b8ccd6"/><path d="M140 349 Q141 346 150 348 L205 357 Q222 360 224.5 368 Q225 374 218 373 L200 366 L150 359 Q139 357 140 351 Z" fill="url(#lg2)"/><path d="M141 348 Q143 345.5 152 347 L206 356.5 Q220 359 224.5 366 Q216 361 204 360 L150 352 Q142 351 141 350 Z" fill="#f4f8fa"/><path d="M181 338.5 L160 341.5 Q144 344 140 348 Q142 352 150 351 L168 349 L181 346.6 Z" fill="#a8c0cc"/><path d="M181 338.5 L160 341.5 Q146 344 141 347 L160 344.5 L181 342 Z" fill="#e0eaee"/><rect x="181" y="338.5" width="52.5" height="8.100000000000023" fill="#fff"/><rect x="181.00" y="338.50" width="8.70" height="4.05" fill="#95d4e7"/><rect x="198.40" y="338.50" width="8.70" height="4.05" fill="#95d4e7"/><rect x="215.80" y="338.50" width="8.70" height="4.05" fill="#95d4e7"/><rect x="233.20" y="338.50" width="0.30" height="4.05" fill="#95d4e7"/><rect x="189.70" y="342.55" width="8.70" height="4.05" fill="#95d4e7"/><rect x="207.10" y="342.55" width="8.70" height="4.05" fill="#95d4e7"/><rect x="224.50" y="342.55" width="8.70" height="4.05" fill="#95d4e7"/><rect x="140.5" y="379.6" width="25.5" height="9.0" fill="#fff"/><rect x="140.50" y="379.60" width="8.50" height="4.50" fill="#95d4e7"/><rect x="157.50" y="379.60" width="8.50" height="4.50" fill="#95d4e7"/><rect x="149.00" y="384.10" width="8.50" height="4.50" fill="#95d4e7"/><rect x="139" y="346" width="2.2" height="2.2" fill="#e02020"/><rect x="164" y="346" width="2.2" height="2.2" fill="#e02020"/><rect x="181" y="355" width="2.2" height="2.2" fill="#e02020"/><rect x="181" y="358" width="2.2" height="2.2" fill="#2040ff"/><rect x="181" y="361" width="2.2" height="2.2" fill="#2040ff"/><rect x="149" y="350" width="2.2" height="2.2" fill="#2040ff"/><rect x="157" y="348" width="2.2" height="2.2" fill="#e02020"/><circle cx="161.5" cy="351" r="1.8" fill="#400"/><rect x="289.5" y="422" width="15.5" height="15.5" fill="#fff"/></g><defs><clipPath id="cpv"><rect x="322" y="252" width="317" height="202"/></clipPath><linearGradient id="pside" x1="0" y1="0" x2="0" y2="1"><stop offset="0" stop-color="#c8d0d4"/><stop offset="1" stop-color="#8898a4"/></linearGradient></defs><g clip-path="url(#cpv)"><line x1="383.0" y1="327.3" x2="540.0" y2="338.3" stroke="#7c7c7c" stroke-width="0.75" opacity="0.95"/><line x1="378.9" y1="332.1" x2="541.5" y2="343.5" stroke="#7c7c7c" stroke-width="0.75" opacity="0.95"/><line x1="374.6" y1="337.2" x2="543.1" y2="349.0" stroke="#7c7c7c" stroke-width="0.75" opacity="0.95"/><line x1="369.9" y1="342.8" x2="544.8" y2="355.0" stroke="#7c7c7c" stroke-width="0.75" opacity="0.95"/><line x1="364.7" y1="348.8" x2="546.7" y2="361.5" stroke="#7c7c7c" stroke-width="0.75" opacity="0.95"/><line x1="359.2" y1="355.3" x2="548.7" y2="368.6" stroke="#7c7c7c" stroke-width="0.75" opacity="0.95"/><line x1="353.2" y1="362.4" x2="550.9" y2="376.3" stroke="#7c7c7c" stroke-width="0.75" opacity="0.95"/><line x1="346.6" y1="370.2" x2="553.3" y2="384.7" stroke="#7c7c7c" stroke-width="0.75" opacity="0.95"/><line x1="339.3" y1="378.8" x2="555.9" y2="393.9" stroke="#7c7c7c" stroke-width="0.75" opacity="0.95"/><line x1="331.3" y1="388.2" x2="558.9" y2="404.1" stroke="#7c7c7c" stroke-width="0.75" opacity="0.95"/><line x1="322.4" y1="398.6" x2="562.1" y2="415.4" stroke="#7c7c7c" stroke-width="0.75" opacity="0.95"/><line x1="312.5" y1="410.3" x2="565.7" y2="428.0" stroke="#7c7c7c" stroke-width="0.75" opacity="0.95"/><line x1="301.3" y1="423.4" x2="569.8" y2="442.2" stroke="#7c7c7c" stroke-width="0.75" opacity="0.95"/><line x1="288.8" y1="438.2" x2="574.4" y2="458.2" stroke="#7c7c7c" stroke-width="0.75" opacity="0.95"/><line x1="274.4" y1="455.1" x2="579.6" y2="476.5" stroke="#7c7c7c" stroke-width="0.75" opacity="0.95"/><line x1="257.9" y1="474.5" x2="585.7" y2="497.5" stroke="#7c7c7c" stroke-width="0.75" opacity="0.95"/><line x1="383.0" y1="327.3" x2="257.9" y2="474.5" stroke="#7c7c7c" stroke-width="0.75" opacity="0.95"/><line x1="390.3" y1="327.8" x2="273.1" y2="475.6" stroke="#7c7c7c" stroke-width="0.75" opacity="0.95"/><line x1="397.6" y1="328.3" x2="288.4" y2="476.7" stroke="#7c7c7c" stroke-width="0.75" opacity="0.95"/><line x1="405.0" y1="328.9" x2="303.9" y2="477.8" stroke="#7c7c7c" stroke-width="0.75" opacity="0.95"/><line x1="412.5" y1="329.4" x2="319.5" y2="478.8" stroke="#7c7c7c" stroke-width="0.75" opacity="0.95"/><line x1="420.0" y1="329.9" x2="335.1" y2="479.9" stroke="#7c7c7c" stroke-width="0.75" opacity="0.95"/><line x1="427.6" y1="330.4" x2="350.9" y2="481.1" stroke="#7c7c7c" stroke-width="0.75" opacity="0.95"/><line x1="435.2" y1="331.0" x2="366.9" y2="482.2" stroke="#7c7c7c" stroke-width="0.75" opacity="0.95"/><line x1="442.9" y1="331.5" x2="382.9" y2="483.3" stroke="#7c7c7c" stroke-width="0.75" opacity="0.95"/><line x1="450.6" y1="332.0" x2="399.1" y2="484.4" stroke="#7c7c7c" stroke-width="0.75" opacity="0.95"/><line x1="458.4" y1="332.6" x2="415.4" y2="485.6" stroke="#7c7c7c" stroke-width="0.75" opacity="0.95"/><line x1="466.3" y1="333.1" x2="431.8" y2="486.7" stroke="#7c7c7c" stroke-width="0.75" opacity="0.95"/><line x1="474.2" y1="333.7" x2="448.4" y2="487.9" stroke="#7c7c7c" stroke-width="0.75" opacity="0.95"/><line x1="482.2" y1="334.3" x2="465.1" y2="489.0" stroke="#7c7c7c" stroke-width="0.75" opacity="0.95"/><line x1="490.3" y1="334.8" x2="481.9" y2="490.2" stroke="#7c7c7c" stroke-width="0.75" opacity="0.95"/><line x1="498.4" y1="335.4" x2="498.8" y2="491.4" stroke="#7c7c7c" stroke-width="0.75" opacity="0.95"/><line x1="506.6" y1="336.0" x2="515.9" y2="492.6" stroke="#7c7c7c" stroke-width="0.75" opacity="0.95"/><line x1="514.8" y1="336.5" x2="533.1" y2="493.8" stroke="#7c7c7c" stroke-width="0.75" opacity="0.95"/><line x1="523.1" y1="337.1" x2="550.5" y2="495.0" stroke="#7c7c7c" stroke-width="0.75" opacity="0.95"/><line x1="531.5" y1="337.7" x2="568.0" y2="496.2" stroke="#7c7c7c" stroke-width="0.75" opacity="0.95"/><line x1="540.0" y1="338.3" x2="585.7" y2="497.5" stroke="#7c7c7c" stroke-width="0.75" opacity="0.95"/><path d="M380.0 362.0 L381.0 376.0 L385.0 388.0 L393.0 398.0 L404.0 406.0 L418.0 411.0 L432.0 413.5 L563.3 419.3 L563.3 424.8 L432.0 419.0 L418.0 416.5 L404.0 411.5 L393.0 403.5 L385.0 393.5 L381.0 381.5 L380.0 367.5 Z" fill="#98a8b4"/><path d="M380.0 366.0 L381.0 380.0 L385.0 392.0 L393.0 402.0 L404.0 410.0 L418.0 415.0 L432.0 417.5 L563.3 423.3 L563.3 425.3 L432.0 419.5 L418.0 417.0 L404.0 412.0 L393.0 404.0 L385.0 394.0 L381.0 382.0 L380.0 368.0 Z" fill="#4050d0" opacity="0.75"/><path d="M380.0 362.0 L381.0 376.0 L385.0 388.0 L393.0 398.0 L404.0 406.0 L418.0 411.0 L432.0 413.5 L563.3 419.3 L549.6 387.2 L448.8 382.6 L430.0 374.0 L400.0 366.0 Z" fill="#e4eaec"/><path d="M448.8 382.6 L465.6 383.4 L461.9 393.7 L443.4 392.9 Z" fill="#88bccc"/><path d="M438.1 403.2 L458.2 404.1 L454.5 414.5 L432.7 413.5 Z" fill="#88bccc"/><path d="M461.9 393.7 L480.3 394.6 L478.3 405.0 L458.2 404.1 Z" fill="#88bccc"/><path d="M482.4 384.1 L499.2 384.9 L498.8 395.4 L480.3 394.6 Z" fill="#88bccc"/><path d="M478.3 405.0 L498.4 405.9 L498.0 416.4 L476.2 415.4 Z" fill="#88bccc"/><path d="M498.8 395.4 L517.3 396.2 L518.5 406.8 L498.4 405.9 Z" fill="#88bccc"/><path d="M516.0 385.7 L532.8 386.4 L535.7 397.1 L517.3 396.2 Z" fill="#88bccc"/><path d="M518.5 406.8 L538.6 407.7 L541.5 418.3 L519.8 417.4 Z" fill="#88bccc"/><path d="M535.7 397.1 L554.2 397.9 L558.7 408.6 L538.6 407.7 Z" fill="#88bccc"/><path d="M389.0 359.0 L390.0 372.0 L399.0 368.0 L398.0 356.0 Z" fill="#88bccc"/><path d="M381.0 376.0 L385.0 388.0 L394.0 383.0 L390.0 372.0 Z" fill="#88bccc"/><path d="M394.0 383.0 L401.5 392.0 L410.0 386.0 L403.0 378.0 Z" fill="#88bccc"/><path d="M393.0 398.0 L404.0 406.0 L412.0 398.5 L401.5 392.0 Z" fill="#88bccc"/><path d="M412.0 398.5 L425.0 402.5 L432.0 394.0 L420.0 391.0 Z" fill="#88bccc"/><path d="M418.0 411.0 L432.0 413.5 L438.5 404.8 L425.0 402.5 Z" fill="#88bccc"/><path d="M438.5 404.8 L453.0 406.1 L458.0 398.0 L445.0 396.0 Z" fill="#88bccc"/><path d="M359.8 335.2 L362.7 349.0 L371.0 360.0 L385.0 368.0 L405.0 374.0 L428.0 376.5 L450.0 376.5 L470.0 372.5 L485.0 364.5 L493.0 352.0 L495.0 339.0 L495.0 346.0 L493.0 359.0 L485.0 371.5 L470.0 379.5 L450.0 383.5 L428.0 383.5 L405.0 381.0 L385.0 375.0 L371.0 367.0 L362.7 356.0 L359.8 342.2 Z" fill="url(#pside)"/><path d="M391.0 287.0 L378.0 297.0 L368.3 309.7 L362.0 322.0 L359.8 335.2 L362.7 349.0 L371.0 360.0 L385.0 368.0 L405.0 374.0 L428.0 376.5 L450.0 376.5 L470.0 372.5 L485.0 364.5 L493.0 352.0 L495.0 339.0 L490.0 328.0 L478.0 321.0 L460.0 318.0 L440.0 318.0 L420.0 321.0 L408.0 328.0 L413.0 322.0 L420.0 311.0 L430.6 298.0 L430.6 291.0 L425.0 285.6 Z" fill="#c2cacd"/><path d="M430.2 345.0 L414.4 345.0 L416.8 338.0 L431.5 341.4 Z" fill="#7eaab8" opacity="0.9"/><path d="M416.8 338.0 L402.7 334.7 L413.1 325.9 L423.9 332.0 Z" fill="#7eaab8" opacity="0.9"/><path d="M435.1 338.3 L423.9 332.0 L434.5 328.0 L440.6 336.3 Z" fill="#7eaab8" opacity="0.9"/><path d="M434.5 328.0 L428.6 320.1 L447.0 318.0 L447.0 326.6 Z" fill="#7eaab8" opacity="0.9"/><path d="M447.0 335.6 L447.0 326.6 L459.5 328.0 L453.4 336.3 Z" fill="#7eaab8" opacity="0.9"/><path d="M459.5 328.0 L465.4 320.1 L480.9 325.9 L470.1 332.0 Z" fill="#7eaab8" opacity="0.9"/><path d="M458.9 338.3 L470.1 332.0 L477.2 338.0 L462.5 341.4 Z" fill="#7eaab8" opacity="0.9"/><path d="M477.2 338.0 L491.3 334.7 L495.0 345.0 L479.6 345.0 Z" fill="#7eaab8" opacity="0.9"/><path d="M391.0 287.0 L378.0 297.0 L398.0 297.0 L408.0 286.3 Z" fill="#78aabb"/><path d="M398.0 297.0 L389.6 309.4 L411.0 309.0 L418.0 297.0 Z" fill="#78aabb"/><path d="M368.3 309.7 L362.0 322.0 L384.0 321.5 L389.6 309.4 Z" fill="#78aabb"/><path d="M384.0 321.5 L381.4 334.1 L403.0 333.0 L406.0 321.0 Z" fill="#78aabb"/><path d="M359.8 335.2 L362.7 349.0 L383.9 346.5 L381.4 334.1 Z" fill="#78aabb"/><path d="M383.9 346.5 L391.5 355.5 L412.0 351.0 L405.0 344.0 Z" fill="#78aabb"/><path d="M371.0 360.0 L385.0 368.0 L405.0 361.5 L391.5 355.5 Z" fill="#78aabb"/><path d="M405.0 361.5 L425.0 365.5 L445.0 357.0 L425.0 355.0 Z" fill="#78aabb"/><path d="M405.0 374.0 L428.0 376.5 L445.0 365.8 L425.0 365.5 Z" fill="#78aabb"/><path d="M445.0 365.8 L463.0 363.2 L476.0 350.0 L462.0 355.0 Z" fill="#78aabb"/><path d="M450.0 376.5 L470.0 372.5 L478.0 358.2 L463.0 363.2 Z" fill="#78aabb"/><path d="M391.0 287.0 L378.0 297.0 L368.3 309.7 L362.0 322.0 L359.8 335.2 L403.0 333.0 L406.0 321.0 L411.0 309.0 L418.0 297.0 L425.0 285.6 Z" fill="#506870" opacity="0.16"/><path d="M425.0 285.6 L430.6 291.0 L430.6 298.0 L420.0 311.0 L413.0 322.0 L408.0 329.5 L403.0 333.0 L406.0 321.0 L411.0 309.0 L418.0 297.0 Z" fill="#d9dfe2"/><path d="M425.0 285.6 L430.6 291.0 L430.6 298.0 L418.0 297.0 Z" fill="#a8c4d0" opacity="0.8"/><path d="M411.0 309.0 L420.0 311.0 L413.0 322.0 L406.0 321.0 Z" fill="#a8c4d0" opacity="0.8"/><path d="M414 287 Q390 303 386 340" fill="none" stroke="#2a8a40" stroke-width="0.8" opacity="0.9"/><path d="M425.7 342.0 L494.5 339.0 L492.0 352.0 L482.0 360.0 L472.0 365.0 L409.0 373.0 Z" fill="#5e5ed4" opacity="0.9"/><path d="M450.0 352.0 L476.0 350.0 L470.0 362.0 L440.0 366.0 Z" fill="#3a48b8" opacity="0.6"/><path d="M425.7 342.0 L450.0 341.0 L445.0 352.0 L418.0 356.0 Z" fill="#3a48b8" opacity="0.5"/><line x1="425.7" y1="342" x2="494.5" y2="339" stroke="#fff" stroke-width="0.8" stroke-dasharray="3 1.5" opacity="0.9"/><line x1="409" y1="373" x2="472" y2="365" stroke="#fff" stroke-width="0.8" stroke-dasharray="3 1.5" opacity="0.9"/><line x1="425.7" y1="342" x2="409" y2="373" stroke="#fff" stroke-width="0.8" stroke-dasharray="3 1.5" opacity="0.9"/><line x1="418" y1="356" x2="476" y2="350" stroke="#fff" stroke-width="0.8" stroke-dasharray="3 1.5" opacity="0.9"/><line x1="447" y1="342" x2="460" y2="364" stroke="#fff" stroke-width="0.8" stroke-dasharray="3 1.5" opacity="0.9"/><line x1="476" y1="350" x2="494.5" y2="339" stroke="#fff" stroke-width="0.8" stroke-dasharray="3 1.5" opacity="0.9"/><line x1="476" y1="350" x2="472" y2="365" stroke="#fff" stroke-width="0.8" stroke-dasharray="3 1.5" opacity="0.9"/><rect x="424.4" y="340.7" width="2.6" height="2.6" fill="#e02020"/><rect x="458.7" y="338.2" width="2.6" height="2.6" fill="#e02020"/><rect x="493.2" y="337.7" width="2.6" height="2.6" fill="#e02020"/><rect x="415.7" y="354.7" width="2.6" height="2.6" fill="#e02020"/><rect x="407.7" y="371.7" width="2.6" height="2.6" fill="#e02020"/><rect x="470.7" y="363.7" width="2.6" height="2.6" fill="#e02020"/><rect x="456.7" y="349.7" width="2.6" height="2.6" fill="#2030ff"/><rect x="408.7" y="375.7" width="2.6" height="2.6" fill="#2030ff"/><rect x="410.7" y="379.7" width="2.6" height="2.6" fill="#2030ff"/><rect x="471.7" y="367.7" width="2.6" height="2.6" fill="#2030ff"/><rect x="472.7" y="371.7" width="2.6" height="2.6" fill="#2030ff"/><rect x="388.7" y="369.7" width="2.6" height="2.6" fill="#2030ff"/><rect x="392.7" y="360.7" width="2.6" height="2.6" fill="#e02020"/><path d="M458 279 Q440 305 437 360 Q437 390 437 418" fill="none" stroke="#e02020" stroke-width="0.9"/><path d="M462 281 Q512 290 528 338 Q531 350 528 358" fill="none" stroke="#208020" stroke-width="0.9"/><path d="M529 362 Q520 400 467 416 Q450 420 440 418" fill="none" stroke="#2030e0" stroke-width="0.9"/><path d="M456 283 L461 284 L462 303 Z" fill="#182080" opacity="0.6"/><line x1="460.5" y1="284" x2="460.5" y2="306" stroke="#2838ff" stroke-width="1.1" opacity="1"/><path d="M460.5 314 L463 303 L460.5 298 L458 303 Z" fill="#2838ff"/><line x1="434" y1="282" x2="458" y2="281" stroke="#e02020" stroke-width="1.1" opacity="1"/><path d="M426 282 L434 279.5 L434 284.5 Z" fill="#e02020"/><path d="M442 283 L458 279 L450 292 Z" fill="none" stroke="#d05020" stroke-width="0.8" opacity="0.8"/><line x1="458" y1="283" x2="464" y2="272" stroke="#20a020" stroke-width="0.9" opacity="1"/><line x1="452" y1="281" x2="462" y2="281" stroke="#20a020" stroke-width="0.8" opacity="1"/><path d="M455.5 311 L458.1 321 L452.9 321 Z" fill="#2030ff"/><line x1="455.5" y1="318" x2="455.5" y2="350" stroke="#2030ff" stroke-width="1.1" opacity="1"/><line x1="367" y1="352" x2="393" y2="352" stroke="#e03030" stroke-width="0.8" opacity="0.9"/><line x1="401" y1="337" x2="393" y2="352" stroke="#30b030" stroke-width="0.8" opacity="0.9"/><line x1="398" y1="374" x2="393" y2="352" stroke="#2040e0" stroke-width="0.8" opacity="0.9"/><line x1="367" y1="352" x2="396" y2="346" stroke="#e03030" stroke-width="0.8" opacity="0.9"/><line x1="401" y1="337" x2="396" y2="346" stroke="#30b030" stroke-width="0.8" opacity="0.9"/><line x1="398" y1="374" x2="396" y2="346" stroke="#2040e0" stroke-width="0.8" opacity="0.9"/><line x1="367" y1="352" x2="389" y2="358" stroke="#e03030" stroke-width="0.8" opacity="0.9"/><line x1="401" y1="337" x2="389" y2="358" stroke="#30b030" stroke-width="0.8" opacity="0.9"/><line x1="398" y1="374" x2="389" y2="358" stroke="#2040e0" stroke-width="0.8" opacity="0.9"/><line x1="356" y1="352" x2="367" y2="352" stroke="#e02020" stroke-width="1.1" opacity="1"/><path d="M357 352 L364 349.7 L364 354.3 Z" fill="#e02020"/><path d="M404 333 L399 340 L402 341 Z" fill="#107a10"/><path d="M398 378 L395.5 371 L400.5 371 Z" fill="#1020c0"/><path d="M413 352 L421 349.2 L421 354.8 Z" fill="#e02020"/><line x1="496" y1="352" x2="520" y2="352" stroke="#e02020" stroke-width="1.1" opacity="1"/><path d="M496 352 L504 349.5 L504 354.5 Z" fill="#e02020"/><path d="M515 345 L530 352 L520 365 Z" fill="none" stroke="#e02020" stroke-width="0.7"/><path d="M528 337 L530 345 L526 345 Z" fill="#20a020"/><line x1="528" y1="345" x2="528" y2="362" stroke="#20a020" stroke-width="1" opacity="1"/><line x1="528" y1="362" x2="526" y2="380" stroke="#2030ff" stroke-width="1.1" opacity="1"/><path d="M526 382 L528.2 374 L523.8 374 Z" fill="#2030ff"/><line x1="449" y1="350" x2="449" y2="372" stroke="#208020" stroke-width="1" opacity="1"/><path d="M447 382 L449.5 372 L444.5 372 Z" fill="#20a020"/><line x1="437" y1="410" x2="455" y2="390" stroke="#20a020" stroke-width="1" opacity="1"/><path d="M456 398 L458 406 L454 406 Z" fill="#20a020"/><line x1="456" y1="400" x2="456" y2="420" stroke="#20a020" stroke-width="1" opacity="1"/><line x1="427" y1="421" x2="445" y2="421" stroke="#e02020" stroke-width="1.1" opacity="1"/><path d="M423 421 L430 418.7 L430 423.3 Z" fill="#e02020"/><path d="M440 418 L452 428 L442 432 L436 422 Z" fill="none" stroke="#e02020" stroke-width="0.8"/><line x1="455" y1="418" x2="455" y2="436" stroke="#2030ff" stroke-width="1.2" opacity="1"/><ellipse cx="616.6" cy="431.5" rx="24" ry="14.5" transform="rotate(33 616.6 431.5)" fill="#7a7aea"/><ellipse cx="617" cy="431.5" rx="16.5" ry="11.2" transform="rotate(33 617 431.5)" fill="#080818"/><path d="M604.0 424.0 L609.0 420.6 L614.4 434.0 L612.0 442.0 L604.0 434.0 Z" fill="#a8a8a2"/><path d="M609.0 420.6 L623.5 420.6 L630.0 434.0 L614.4 434.0 Z" fill="#dcdcd6"/><path d="M614.4 434.0 L630.0 434.0 L626.0 441.0 L612.0 442.0 Z" fill="#909088"/></g></svg>
<div class="t" style="left:9px;top:54.5px;font-size:6.6px;color:#eee;font-weight:normal;transform:scaleX(0.82);">Front</div>
<div class="t" style="left:327px;top:54.5px;font-size:6.6px;color:#eee;font-weight:normal;transform:scaleX(0.82);">Top</div>
<div class="t" style="left:9px;top:257.5px;font-size:6.6px;color:#eee;font-weight:normal;transform:scaleX(0.82);">Left</div>
<div class="t" style="left:327px;top:257.5px;font-size:6.6px;color:#eee;font-weight:normal;transform:scaleX(0.82);">Perspective</div>
<div class="a" style="left:643px;top:47px;width:314px;height:408px;background:#fff"></div>
<svg width="960" height="600" viewBox="0 0 960 600" ><defs><clipPath id="c2d"><rect x="644" y="48" width="312.5" height="406"/></clipPath></defs><g clip-path="url(#c2d)"><rect x="644" y="48" width="312.5" height="406" fill="#fff"/><rect x="636.20" y="44.00" width="32.92" height="32.97" fill="#95d4e7"/><rect x="702.04" y="44.00" width="32.92" height="32.97" fill="#95d4e7"/><rect x="767.88" y="44.00" width="32.92" height="32.97" fill="#95d4e7"/><rect x="833.72" y="44.00" width="32.92" height="32.97" fill="#95d4e7"/><rect x="899.56" y="44.00" width="32.92" height="32.97" fill="#95d4e7"/><rect x="669.12" y="76.97" width="32.92" height="32.97" fill="#95d4e7"/><rect x="734.96" y="76.97" width="32.92" height="32.97" fill="#95d4e7"/><rect x="800.80" y="76.97" width="32.92" height="32.97" fill="#95d4e7"/><rect x="866.64" y="76.97" width="32.92" height="32.97" fill="#95d4e7"/><rect x="932.48" y="76.97" width="32.92" height="32.97" fill="#95d4e7"/><rect x="636.20" y="109.94" width="32.92" height="32.97" fill="#95d4e7"/><rect x="702.04" y="109.94" width="32.92" height="32.97" fill="#95d4e7"/><rect x="767.88" y="109.94" width="32.92" height="32.97" fill="#95d4e7"/><rect x="833.72" y="109.94" width="32.92" height="32.97" fill="#95d4e7"/><rect x="899.56" y="109.94" width="32.92" height="32.97" fill="#95d4e7"/><rect x="669.12" y="142.91" width="32.92" height="32.97" fill="#95d4e7"/><rect x="734.96" y="142.91" width="32.92" height="32.97" fill="#95d4e7"/><rect x="800.80" y="142.91" width="32.92" height="32.97" fill="#95d4e7"/><rect x="866.64" y="142.91" width="32.92" height="32.97" fill="#95d4e7"/><rect x="932.48" y="142.91" width="32.92" height="32.97" fill="#95d4e7"/><rect x="636.20" y="175.88" width="32.92" height="32.97" fill="#95d4e7"/><rect x="702.04" y="175.88" width="32.92" height="32.97" fill="#95d4e7"/><rect x="767.88" y="175.88" width="32.92" height="32.97" fill="#95d4e7"/><rect x="833.72" y="175.88" width="32.92" height="32.97" fill="#95d4e7"/><rect x="899.56" y="175.88" width="32.92" height="32.97" fill="#95d4e7"/><rect x="669.12" y="208.85" width="32.92" height="32.97" fill="#95d4e7"/><rect x="734.96" y="208.85" width="32.92" height="32.97" fill="#95d4e7"/><rect x="800.80" y="208.85" width="32.92" height="32.97" fill="#95d4e7"/><rect x="866.64" y="208.85" width="32.92" height="32.97" fill="#95d4e7"/><rect x="932.48" y="208.85" width="32.92" height="32.97" fill="#95d4e7"/><rect x="636.20" y="241.82" width="32.92" height="32.97" fill="#95d4e7"/><rect x="702.04" y="241.82" width="32.92" height="32.97" fill="#95d4e7"/><rect x="767.88" y="241.82" width="32.92" height="32.97" fill="#95d4e7"/><rect x="833.72" y="241.82" width="32.92" height="32.97" fill="#95d4e7"/><rect x="899.56" y="241.82" width="32.92" height="32.97" fill="#95d4e7"/><rect x="669.12" y="274.79" width="32.92" height="32.97" fill="#95d4e7"/><rect x="734.96" y="274.79" width="32.92" height="32.97" fill="#95d4e7"/><rect x="800.80" y="274.79" width="32.92" height="32.97" fill="#95d4e7"/><rect x="866.64" y="274.79" width="32.92" height="32.97" fill="#95d4e7"/><rect x="932.48" y="274.79" width="32.92" height="32.97" fill="#95d4e7"/><rect x="636.20" y="307.76" width="32.92" height="32.97" fill="#95d4e7"/><rect x="702.04" y="307.76" width="32.92" height="32.97" fill="#95d4e7"/><rect x="767.88" y="307.76" width="32.92" height="32.97" fill="#95d4e7"/><rect x="833.72" y="307.76" width="32.92" height="32.97" fill="#95d4e7"/><rect x="899.56" y="307.76" width="32.92" height="32.97" fill="#95d4e7"/><rect x="669.12" y="340.73" width="32.92" height="32.97" fill="#95d4e7"/><rect x="734.96" y="340.73" width="32.92" height="32.97" fill="#95d4e7"/><rect x="800.80" y="340.73" width="32.92" height="32.97" fill="#95d4e7"/><rect x="866.64" y="340.73" width="32.92" height="32.97" fill="#95d4e7"/><rect x="932.48" y="340.73" width="32.92" height="32.97" fill="#95d4e7"/><rect x="636.20" y="373.70" width="32.92" height="32.97" fill="#95d4e7"/><rect x="702.04" y="373.70" width="32.92" height="32.97" fill="#95d4e7"/><rect x="767.88" y="373.70" width="32.92" height="32.97" fill="#95d4e7"/><rect x="833.72" y="373.70" width="32.92" height="32.97" fill="#95d4e7"/><rect x="899.56" y="373.70" width="32.92" height="32.97" fill="#95d4e7"/><rect x="669.12" y="406.67" width="32.92" height="32.97" fill="#95d4e7"/><rect x="734.96" y="406.67" width="32.92" height="32.97" fill="#95d4e7"/><rect x="800.80" y="406.67" width="32.92" height="32.97" fill="#95d4e7"/><rect x="866.64" y="406.67" width="32.92" height="32.97" fill="#95d4e7"/><rect x="932.48" y="406.67" width="32.92" height="32.97" fill="#95d4e7"/><rect x="636.20" y="439.64" width="32.92" height="32.97" fill="#95d4e7"/><rect x="702.04" y="439.64" width="32.92" height="32.97" fill="#95d4e7"/><rect x="767.88" y="439.64" width="32.92" height="32.97" fill="#95d4e7"/><rect x="833.72" y="439.64" width="32.92" height="32.97" fill="#95d4e7"/><rect x="899.56" y="439.64" width="32.92" height="32.97" fill="#95d4e7"/><defs><clipPath id="gw"><rect x="767.5" y="209" width="33.5" height="33"/><rect x="734.5" y="242" width="33" height="33"/></clipPath><clipPath id="gb"><rect x="734.5" y="209" width="33" height="33"/><rect x="767.5" y="242" width="33.5" height="33"/></clipPath></defs><g clip-path="url(#gb)"><line x1="734.5" y1="209" x2="734.5" y2="275" stroke="#fff" stroke-width="0.7" opacity="0.9"/><line x1="740.0" y1="209" x2="740.0" y2="275" stroke="#fff" stroke-width="0.7" opacity="0.9"/><line x1="745.6" y1="209" x2="745.6" y2="275" stroke="#fff" stroke-width="0.7" opacity="0.9"/><line x1="751.1" y1="209" x2="751.1" y2="275" stroke="#fff" stroke-width="0.7" opacity="0.9"/><line x1="756.7" y1="209" x2="756.7" y2="275" stroke="#fff" stroke-width="0.7" opacity="0.9"/><line x1="762.2" y1="209" x2="762.2" y2="275" stroke="#fff" stroke-width="0.7" opacity="0.9"/><line x1="767.8" y1="209" x2="767.8" y2="275" stroke="#fff" stroke-width="0.7" opacity="0.9"/><line x1="773.3" y1="209" x2="773.3" y2="275" stroke="#fff" stroke-width="0.7" opacity="0.9"/><line x1="778.8" y1="209" x2="778.8" y2="275" stroke="#fff" stroke-width="0.7" opacity="0.9"/><line x1="784.4" y1="209" x2="784.4" y2="275" stroke="#fff" stroke-width="0.7" opacity="0.9"/><line x1="789.9" y1="209" x2="789.9" y2="275" stroke="#fff" stroke-width="0.7" opacity="0.9"/><line x1="795.5" y1="209" x2="795.5" y2="275" stroke="#fff" stroke-width="0.7" opacity="0.9"/><line x1="801.0" y1="209" x2="801.0" y2="275" stroke="#fff" stroke-width="0.7" opacity="0.9"/><line x1="734.5" y1="209.0" x2="801" y2="209.0" stroke="#fff" stroke-width="0.7" opacity="0.9"/><line x1="734.5" y1="214.5" x2="801" y2="214.5" stroke="#fff" stroke-width="0.7" opacity="0.9"/><line x1="734.5" y1="220.0" x2="801" y2="220.0" stroke="#fff" stroke-width="0.7" opacity="0.9"/><line x1="734.5" y1="225.5" x2="801" y2="225.5" stroke="#fff" stroke-width="0.7" opacity="0.9"/><line x1="734.5" y1="231.0" x2="801" y2="231.0" stroke="#fff" stroke-width="0.7" opacity="0.9"/><line x1="734.5" y1="236.5" x2="801" y2="236.5" stroke="#fff" stroke-width="0.7" opacity="0.9"/><line x1="734.5" y1="242.0" x2="801" y2="242.0" stroke="#fff" stroke-width="0.7" opacity="0.9"/><line x1="734.5" y1="247.5" x2="801" y2="247.5" stroke="#fff" stroke-width="0.7" opacity="0.9"/><line x1="734.5" y1="253.0" x2="801" y2="253.0" stroke="#fff" stroke-width="0.7" opacity="0.9"/><line x1="734.5" y1="258.5" x2="801" y2="258.5" stroke="#fff" stroke-width="0.7" opacity="0.9"/><line x1="734.5" y1="264.0" x2="801" y2="264.0" stroke="#fff" stroke-width="0.7" opacity="0.9"/><line x1="734.5" y1="269.5" x2="801" y2="269.5" stroke="#fff" stroke-width="0.7" opacity="0.9"/><line x1="734.5" y1="275.0" x2="801" y2="275.0" stroke="#fff" stroke-width="0.7" opacity="0.9"/></g><g clip-path="url(#gw)"><line x1="734.5" y1="209" x2="734.5" y2="275" stroke="#9ccfe2" stroke-width="0.7" opacity="0.9"/><line x1="740.0" y1="209" x2="740.0" y2="275" stroke="#9ccfe2" stroke-width="0.7" opacity="0.9"/><line x1="745.6" y1="209" x2="745.6" y2="275" stroke="#9ccfe2" stroke-width="0.7" opacity="0.9"/><line x1="751.1" y1="209" x2="751.1" y2="275" stroke="#9ccfe2" stroke-width="0.7" opacity="0.9"/><line x1="756.7" y1="209" x2="756.7" y2="275" stroke="#9ccfe2" stroke-width="0.7" opacity="0.9"/><line x1="762.2" y1="209" x2="762.2" y2="275" stroke="#9ccfe2" stroke-width="0.7" opacity="0.9"/><line x1="767.8" y1="209" x2="767.8" y2="275" stroke="#9ccfe2" stroke-width="0.7" opacity="0.9"/><line x1="773.3" y1="209" x2="773.3" y2="275" stroke="#9ccfe2" stroke-width="0.7" opacity="0.9"/><line x1="778.8" y1="209" x2="778.8" y2="275" stroke="#9ccfe2" stroke-width="0.7" opacity="0.9"/><line x1="784.4" y1="209" x2="784.4" y2="275" stroke="#9ccfe2" stroke-width="0.7" opacity="0.9"/><line x1="789.9" y1="209" x2="789.9" y2="275" stroke="#9ccfe2" stroke-width="0.7" opacity="0.9"/><line x1="795.5" y1="209" x2="795.5" y2="275" stroke="#9ccfe2" stroke-width="0.7" opacity="0.9"/><line x1="801.0" y1="209" x2="801.0" y2="275" stroke="#9ccfe2" stroke-width="0.7" opacity="0.9"/><line x1="734.5" y1="209.0" x2="801" y2="209.0" stroke="#9ccfe2" stroke-width="0.7" opacity="0.9"/><line x1="734.5" y1="214.5" x2="801" y2="214.5" stroke="#9ccfe2" stroke-width="0.7" opacity="0.9"/><line x1="734.5" y1="220.0" x2="801" y2="220.0" stroke="#9ccfe2" stroke-width="0.7" opacity="0.9"/><line x1="734.5" y1="225.5" x2="801" y2="225.5" stroke="#9ccfe2" stroke-width="0.7" opacity="0.9"/><line x1="734.5" y1="231.0" x2="801" y2="231.0" stroke="#9ccfe2" stroke-width="0.7" opacity="0.9"/><line x1="734.5" y1="236.5" x2="801" y2="236.5" stroke="#9ccfe2" stroke-width="0.7" opacity="0.9"/><line x1="734.5" y1="242.0" x2="801" y2="242.0" stroke="#9ccfe2" stroke-width="0.7" opacity="0.9"/><line x1="734.5" y1="247.5" x2="801" y2="247.5" stroke="#9ccfe2" stroke-width="0.7" opacity="0.9"/><line x1="734.5" y1="253.0" x2="801" y2="253.0" stroke="#9ccfe2" stroke-width="0.7" opacity="0.9"/><line x1="734.5" y1="258.5" x2="801" y2="258.5" stroke="#9ccfe2" stroke-width="0.7" opacity="0.9"/><line x1="734.5" y1="264.0" x2="801" y2="264.0" stroke="#9ccfe2" stroke-width="0.7" opacity="0.9"/><line x1="734.5" y1="269.5" x2="801" y2="269.5" stroke="#9ccfe2" stroke-width="0.7" opacity="0.9"/><line x1="734.5" y1="275.0" x2="801" y2="275.0" stroke="#9ccfe2" stroke-width="0.7" opacity="0.9"/></g><rect x="734.5" y="209.5" width="132" height="65.5" fill="none" stroke="#8040c0" stroke-width="1"/><circle cx="800.5" cy="242" r="72" fill="none" stroke="#3030c0" stroke-width="1"/><line x1="801" y1="150" x2="818" y2="170" stroke="#50a050" stroke-width="0.8" opacity="0.9"/><line x1="801" y1="155" x2="813" y2="170" stroke="#b07060" stroke-width="0.8" opacity="0.9"/><line x1="801" y1="142" x2="801" y2="170" stroke="#1a7a2a" stroke-width="0.9" opacity="1"/><path d="M801 135 L803.2 143 L798.8 143 Z" fill="#106010"/><line x1="801" y1="170" x2="828" y2="170" stroke="#b83050" stroke-width="0.9" opacity="1"/><path d="M836 170 L828 167.4 L828 172.6 Z" fill="#d01818"/><line x1="728.5" y1="222" x2="745.5" y2="242" stroke="#50a050" stroke-width="0.8" opacity="0.9"/><line x1="728.5" y1="227" x2="740.5" y2="242" stroke="#b07060" stroke-width="0.8" opacity="0.9"/><line x1="728.5" y1="216" x2="728.5" y2="242" stroke="#1a7a2a" stroke-width="0.9" opacity="1"/><path d="M728.5 209 L730.7 217 L726.3 217 Z" fill="#106010"/><line x1="728.5" y1="242" x2="753.5" y2="242" stroke="#b83050" stroke-width="0.9" opacity="1"/><path d="M761.5 242 L753.5 239.4 L753.5 244.6 Z" fill="#d01818"/><line x1="872" y1="222" x2="889" y2="242" stroke="#50a050" stroke-width="0.8" opacity="0.9"/><line x1="872" y1="227" x2="884" y2="242" stroke="#b07060" stroke-width="0.8" opacity="0.9"/><line x1="872" y1="216" x2="872" y2="242" stroke="#1a7a2a" stroke-width="0.9" opacity="1"/><path d="M872 209 L874.2 217 L869.8 217 Z" fill="#106010"/><line x1="872" y1="242" x2="897" y2="242" stroke="#b83050" stroke-width="0.9" opacity="1"/><path d="M905 242 L897 239.4 L897 244.6 Z" fill="#d01818"/><line x1="801" y1="293.5" x2="818" y2="313.5" stroke="#50a050" stroke-width="0.8" opacity="0.9"/><line x1="801" y1="298.5" x2="813" y2="313.5" stroke="#b07060" stroke-width="0.8" opacity="0.9"/><line x1="801" y1="285.5" x2="801" y2="313.5" stroke="#1a7a2a" stroke-width="0.9" opacity="1"/><path d="M801 278.5 L803.2 286.5 L798.8 286.5 Z" fill="#106010"/><line x1="801" y1="313.5" x2="828" y2="313.5" stroke="#b83050" stroke-width="0.9" opacity="1"/><path d="M836 313.5 L828 310.9 L828 316.1 Z" fill="#d01818"/><line x1="801" y1="204" x2="801" y2="241" stroke="#1a7a2a" stroke-width="0.9" opacity="1"/><path d="M801 196 L803.2 204 L798.8 204 Z" fill="#106010"/><line x1="808" y1="242" x2="840" y2="242" stroke="#b83050" stroke-width="0.9" opacity="1"/><path d="M847 242 L839 239.4 L839 244.6 Z" fill="#d01818"/><path d="M801 225 L815 225 L815 241" fill="none" stroke="#c02020" stroke-width="1"/><rect x="732.5" y="207.5" width="4" height="4" fill="#e02020"/><rect x="799" y="207.5" width="4" height="4" fill="#e02020"/><rect x="864.5" y="207.5" width="4" height="4" fill="#e02020"/><rect x="732.5" y="240" width="4" height="4" fill="#e02020"/><rect x="864.5" y="240" width="4" height="4" fill="#e02020"/><rect x="732.5" y="273" width="4" height="4" fill="#e02020"/><rect x="799" y="273" width="4" height="4" fill="#e02020"/><rect x="864.5" y="273" width="4" height="4" fill="#e02020"/><rect x="924.5" y="422.5" width="15.5" height="15.5" fill="#fff" stroke="#222" stroke-width="1"/></g></svg>
<div class="t" style="left:5px;top:459.5px;font-size:6.6px;color:#e8ecf4;font-weight:normal;transform:scaleX(0.82);">Textures</div>
<svg width="960" height="600"><path d="M950.5 461 L954 464.5 M954 461 L950.5 464.5" stroke="#dde3ee" stroke-width="1"/></svg>
<div class="a" style="left:3px;top:467px;width:954px;height:93px;background:#fff"></div>
<div class="a" style="left:7px;top:471px;width:68px;height:74px;background:#d4d0c8"></div>
<svg width="960" height="600"><rect x="9" y="473" width="64" height="64" fill="#fff"/><rect x="9" y="473" width="32" height="32" fill="#95d4e7"/><rect x="41" y="505" width="32" height="32" fill="#95d4e7"/></svg>
<div class="t" style="left:25px;top:538.3px;font-size:6.6px;color:#000;font-weight:normal;transform:scaleX(0.8);-webkit-text-stroke:0.25px #000;">Checker.bmp</div>
<div class="a" style="left:3px;top:560px;width:24px;height:10px;background:#fff"></div>
<div class="t" style="left:5px;top:562.3px;font-size:6.6px;color:#000;font-weight:normal;transform:scaleX(0.8);-webkit-text-stroke:0.25px #000;">Textures</div>
<div class="t" style="left:29.5px;top:562.3px;font-size:6.6px;color:#eef2fa;font-weight:normal;transform:scaleX(0.8);">Models</div>
<div class="t" style="left:772px;top:575.5px;font-size:6.6px;color:#e0e6f2;font-weight:normal;transform:scaleX(0.78);">Position X</div>
<div class="a" style="left:799px;top:573px;width:22px;height:10px;background:#fff"></div>
<div class="t" style="left:800px;top:575.3px;font-size:6.6px;color:#000;font-weight:normal;transform:scaleX(0.8);-webkit-text-stroke:0.25px #000;">-2</div>
<div class="a" style="left:821px;top:573px;width:10px;height:10px;background:#d8dce6"></div><svg width="960" height="600"><path d="M826 574 L829 577 L823 577 Z M826 582 L829 579 L823 579 Z" fill="#222"/></svg>
<div class="t" style="left:835px;top:575.5px;font-size:6.6px;color:#e0e6f2;font-weight:normal;transform:scaleX(0.78);">Position Y</div>
<div class="a" style="left:862px;top:573px;width:23px;height:10px;background:#fff"></div>
<div class="t" style="left:863px;top:575.3px;font-size:6.6px;color:#000;font-weight:normal;transform:scaleX(0.8);-webkit-text-stroke:0.25px #000;">-1.5000</div>
<div class="a" style="left:885px;top:573px;width:10px;height:10px;background:#d8dce6"></div><svg width="960" height="600"><path d="M890 574 L893 577 L887 577 Z M890 582 L893 579 L887 579 Z" fill="#222"/></svg>
<div class="t" style="left:898px;top:575.5px;font-size:6.6px;color:#e0e6f2;font-weight:normal;transform:scaleX(0.78);">Position Z</div>
<div class="a" style="left:926px;top:573px;width:22px;height:10px;background:#fff"></div>
<div class="t" style="left:927px;top:575.3px;font-size:6.6px;color:#000;font-weight:normal;transform:scaleX(0.8);-webkit-text-stroke:0.25px #000;">4.5</div>
<div class="a" style="left:948px;top:573px;width:10px;height:10px;background:#d8dce6"></div><svg width="960" height="600"><path d="M953 574 L956 577 L950 577 Z M953 582 L956 579 L950 579 Z" fill="#222"/></svg>
<div class="a" style="left:0;top:585px;width:960px;height:15px;background:#d4d0c8;border-top:1px solid #fff"></div>
<div class="a" style="left:1px;top:587.5px;width:27px;height:12px;background:#d4d0c8;border:1px solid;border-color:#fff #404040 #404040 #fff"></div><div class="t" style="left:11px;top:590.3px;font-size:7.0px;color:#000;font-weight:bold;transform:scaleX(0.8);-webkit-text-stroke:0.25px #000;">Start</div>
<div class="a" style="left:78px;top:587.5px;width:80px;height:12px;background:#d4d0c8;border:1px solid;border-color:#fff #404040 #404040 #fff"></div><div class="t" style="left:89.5px;top:590.3px;font-size:7.0px;color:#000;font-weight:normal;transform:scaleX(0.8);-webkit-text-stroke:0.25px #000;">Trillian</div>
<div class="a" style="left:159px;top:587.5px;width:80px;height:12px;background:#d4d0c8;border:1px solid;border-color:#fff #404040 #404040 #fff"></div><div class="t" style="left:170.5px;top:590.3px;font-size:7.0px;color:#000;font-weight:normal;transform:scaleX(0.8);-webkit-text-stroke:0.25px #000;">Computer</div>
<div class="a" style="left:241px;top:587.5px;width:80px;height:12px;background:#d4d0c8;border:1px solid;border-color:#fff #404040 #404040 #fff"></div><div class="t" style="left:252.5px;top:590.3px;font-size:7.0px;color:#000;font-weight:normal;transform:scaleX(0.8);-webkit-text-stroke:0.25px #000;">Release</div>
<div class="a" style="left:322px;top:587.5px;width:80px;height:12px;background:#e8e6e1;border:1px solid;border-color:#404040 #fff #fff #404040"></div><div class="t" style="left:335.5px;top:590.3px;font-size:7.0px;color:#000;font-weight:bold;transform:scaleX(0.8);-webkit-text-stroke:0.25px #000;">Softcube Designer</div>
<div class="a" style="left:403px;top:587.5px;width:80px;height:12px;background:#d4d0c8;border:1px solid;border-color:#fff #404040 #404040 #fff"></div><div class="t" style="left:414.5px;top:590.3px;font-size:7.0px;color:#000;font-weight:normal;transform:scaleX(0.8);-webkit-text-stroke:0.25px #000;">Bahn.bmp - Paint</div>
<div class="a" style="left:485px;top:587.5px;width:80px;height:12px;background:#d4d0c8;border:1px solid;border-color:#fff #404040 #404040 #fff"></div><div class="t" style="left:496.5px;top:590.3px;font-size:7.0px;color:#000;font-weight:normal;transform:scaleX(0.8);-webkit-text-stroke:0.25px #000;">Showroom - Aktuelle Arb...</div>
<div class="t" style="left:860px;top:590.6px;font-size:6.8px;color:#000;font-weight:normal;transform:scaleX(0.85);-webkit-text-stroke:0.25px #000;">DE</div>
<div class="a" style="left:870px;top:587.5px;width:89px;height:12px;border:1px solid;border-color:#808080 #fff #fff #808080"></div>
<div class="t" style="left:941px;top:590.6px;font-size:6.8px;color:#000;font-weight:normal;transform:scaleX(0.82);-webkit-text-stroke:0.25px #000;">10:28</div>
<svg width="960" height="600" viewBox="0 0 960 600" ><path d="M3 590 L6 589.5 L6 593 L3 593.3 Z" fill="#e84020"/><path d="M6.5 589.4 L9.5 589 L9.5 592.8 L6.5 593 Z" fill="#40a020"/><path d="M3 593.8 L6 593.5 L6 597 L3 597.3 Z" fill="#2060e0"/><path d="M6.5 593.5 L9.5 593.3 L9.5 596.8 L6.5 597 Z" fill="#f0c020"/><rect x="31" y="590" width="7" height="6" fill="#3a70c8"/><rect x="31" y="590" width="7" height="1.5" fill="#1a3a80"/><circle cx="47" cy="593" r="3.2" fill="none" stroke="#2a78d0" stroke-width="1.3"/><path d="M43.5 594 L50.5 592" stroke="#f0a020" stroke-width="0.8"/><circle cx="57.5" cy="593" r="3.6" fill="#e06818"/><circle cx="57.8" cy="592.5" r="1.8" fill="#3a60b0"/><rect x="65" y="589.5" width="7.5" height="7" fill="#60a838"/><path d="M67 590.8 L71.5 593 L67 595.2 Z" fill="#f8d030"/><path d="M82 590 L84 592 L83 597 M85 591 L88 594 L86 597" fill="none" stroke="#506040" stroke-width="1"/><circle cx="82.5" cy="590.5" r="1.2" fill="#80a060"/><circle cx="86" cy="591" r="1.2" fill="#40a0c0"/><rect x="162" y="590" width="6" height="5" fill="#3050a0"/><rect x="163" y="591" width="4" height="3" fill="#a0c0f0"/><rect x="161.5" y="595.5" width="7" height="1.2" fill="#404060"/><path d="M244 590.5 L247 590.5 L248 591.5 L250 591.5 L250 597 L244 597 Z" fill="#f0d860"/><rect x="244" y="592.5" width="6" height="4.5" fill="#f8e890"/><rect x="325" y="589.5" width="9" height="7.5" fill="#fff" stroke="#2050a0" stroke-width="1"/><rect x="325" y="589.5" width="9" height="1.8" fill="#2050a0"/><path d="M407 590 L409 596 M409 590 L411 593" stroke="#a08040" stroke-width="1.2"/><circle cx="407.5" cy="590.5" r="1.3" fill="#e8c070"/><circle cx="490" cy="593" r="3.5" fill="#e07010"/><circle cx="490.3" cy="592.5" r="1.7" fill="#f0c040"/><path d="M874 592 L876 594 L874 596 M877 592 L879 594 L877 596" fill="none" stroke="#000" stroke-width="0.9"/><rect x="881.5" y="590" width="4.5" height="7" fill="#60b0e0"/><rect x="882.5" y="589" width="2.5" height="2" fill="#2060a0"/><circle cx="892" cy="593.5" r="3" fill="#d82020"/><path d="M890.5 592 L893.5 595 M893.5 592 L890.5 595" stroke="#fff" stroke-width="0.8"/><path d="M897 591 L900 594 L903 596" stroke="#208060" stroke-width="1.2" fill="none"/><circle cx="897.5" cy="591" r="1.2" fill="#2050c0"/><circle cx="902.5" cy="596" r="1.3" fill="#20a080"/><rect x="907.5" y="589.5" width="7" height="7" rx="1" fill="#e02828"/><path d="M909 593 Q911 590 913 593 Q911 596 909 593" fill="none" stroke="#fff" stroke-width="0.8"/><circle cx="925" cy="593.5" r="3.3" fill="#2a70c0"/><path d="M923 592 Q925 594 927.5 592" stroke="#fff" stroke-width="0.8" fill="none"/><path d="M930.5 592 L932 592 L934 590 L934 597 L932 595 L930.5 595 Z" fill="#e8e8e8" stroke="#606060" stroke-width="0.6"/><path d="M935.5 591 Q937 593.5 935.5 596" fill="none" stroke="#606060" stroke-width="0.6"/></svg>
</body></html>
